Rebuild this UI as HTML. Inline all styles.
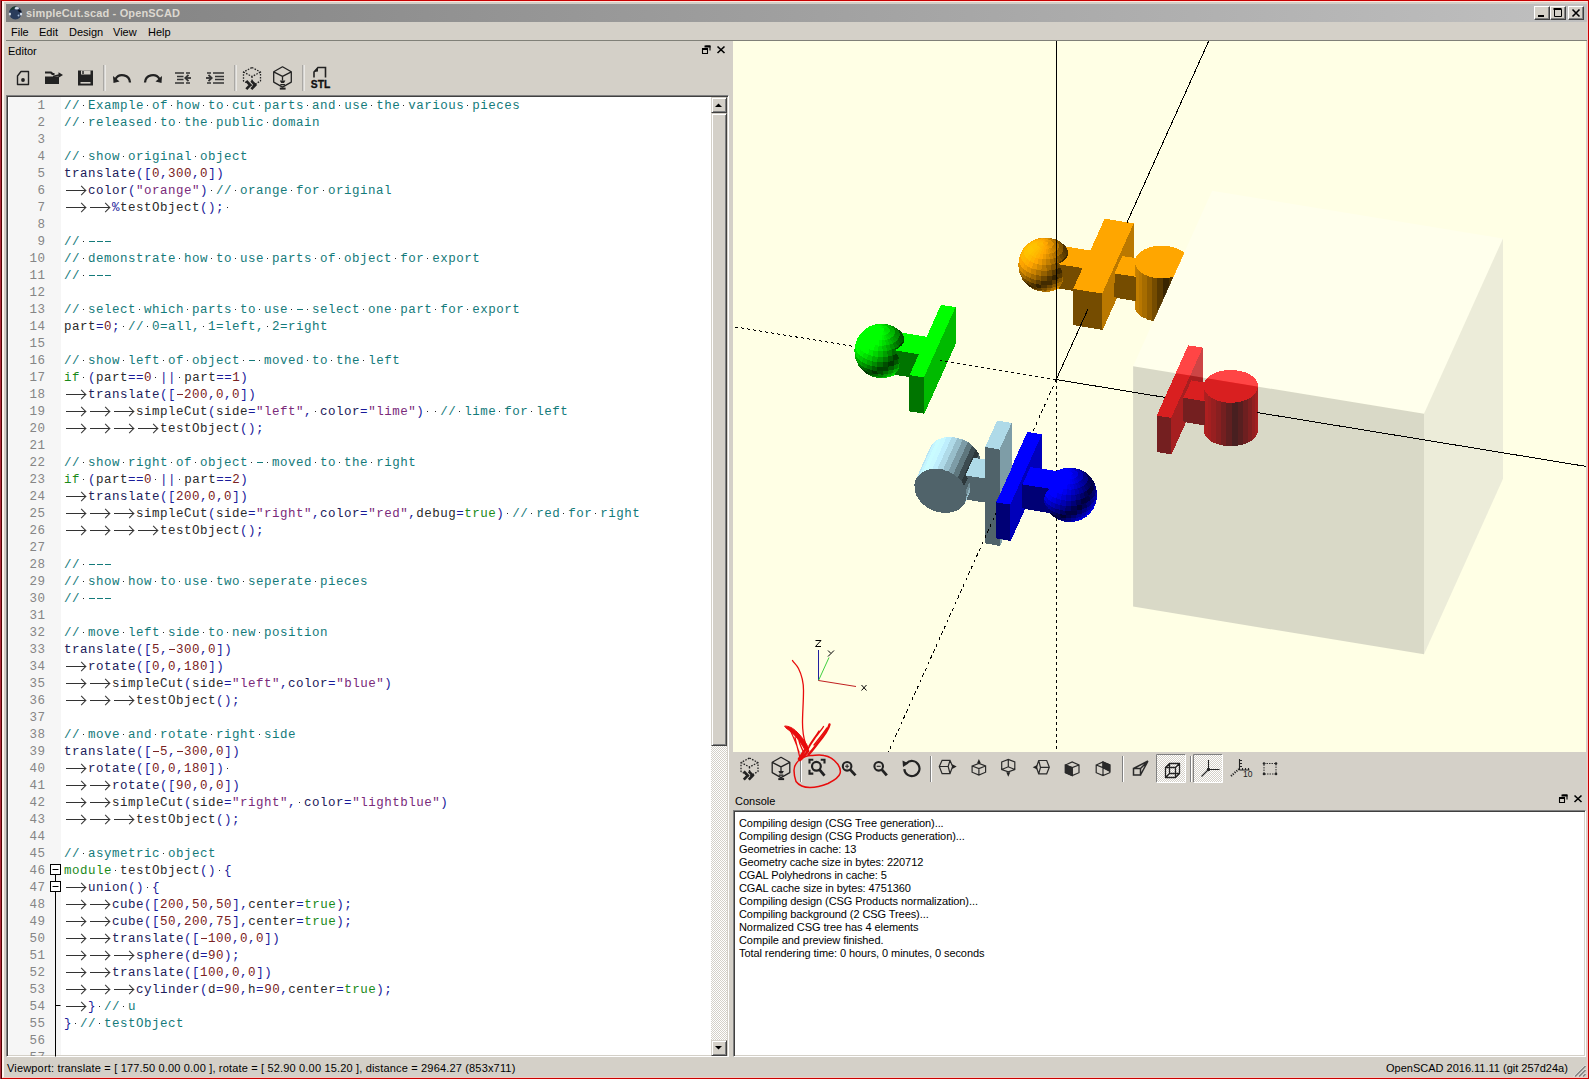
<!DOCTYPE html>
<html><head><meta charset="utf-8"><style>
*{margin:0;padding:0;box-sizing:border-box}
html,body{width:1589px;height:1079px;overflow:hidden;background:#c80000;font-family:"Liberation Sans",sans-serif}
.a{position:absolute}
#win{position:absolute;left:2px;top:1px;width:1586px;height:1077px;background:#d4d0c8;border-left:2px solid #fff6ee;border-top:1px solid #ffe4dc;border-right:1px solid #f4c4c4;border-bottom:1px solid #f8c8c0}
#title{position:absolute;left:6px;top:4px;width:1581px;height:18px;background:linear-gradient(90deg,#808080,#c0c0c0)}
#title span{position:absolute;left:20px;top:3px;font-size:11px;font-weight:bold;color:#dcd8d0;white-space:pre;letter-spacing:0.15px}
.tbtn{position:absolute;top:6px;width:16px;height:14px;background:#d4d0c8;border-top:1px solid #fff;border-left:1px solid #fff;border-right:1px solid #404040;border-bottom:1px solid #404040;box-shadow:inset -1px -1px 0 #808080}
.menu{position:absolute;top:26px;font-size:11px;color:#000;white-space:pre}
.lbl{position:absolute;font-size:11px;color:#000;white-space:pre}
#ed{position:absolute;left:6px;top:95px;width:723px;height:962px;border-top:1px solid #808080;border-left:1px solid #808080;border-right:1px solid #fff;border-bottom:1px solid #fff;background:#fff;box-shadow:inset 1px 1px 0 #404040,inset -1px -1px 0 #d4d0c8}
#edin{position:absolute;left:7px;top:97px;width:721px;height:959px;border-top:1px solid #808080;border-left:1px solid #808080;overflow:hidden}
#margin{position:absolute;left:9px;top:97px;width:52px;height:958px;background:#f6f6f6}
.ln{position:absolute;left:8px;width:37.5px;text-align:right;font-family:"Liberation Mono",monospace;font-size:12.5px;letter-spacing:0.5px;line-height:17px;color:#858585;white-space:pre}
.cl{position:absolute;left:64px;font-family:"Liberation Mono",monospace;font-size:12.5px;letter-spacing:0.5px;line-height:17px;white-space:pre;height:17px}
.tb{display:inline-block;width:24px;height:17px;vertical-align:top;position:relative}
.tb::before{content:"";position:absolute;left:2px;width:19px;top:7px;height:1px;background:#333}
.tb::after{content:"";position:absolute;left:14px;top:4px;width:6px;height:6px;border-top:1px solid #333;border-right:1px solid #333;transform:rotate(45deg)}
.d{display:inline-block;width:8px;height:17px;vertical-align:top;position:relative;background:none!important}
.d::after{content:"";position:absolute;left:3px;top:7px;width:1px;height:1px;background:#222}
#sb{position:absolute;left:711px;top:97px;width:16px;height:959px;background:repeating-conic-gradient(#fff 0 25%,#d4d0c8 0 50%) 0 0/2px 2px}
.sbb{position:absolute;left:711px;width:16px;background:#d4d0c8;border-top:1px solid #d4d0c8;border-left:1px solid #d4d0c8;border-right:1px solid #404040;border-bottom:1px solid #404040;box-shadow:inset 1px 1px 0 #fff,inset -1px -1px 0 #808080}
#vp{position:absolute;left:733px;top:41px;width:853px;height:711px;background:#ffffe5}
#con{position:absolute;left:733px;top:810px;width:853px;height:247px;background:#fff;border-top:1px solid #808080;border-left:1px solid #808080;border-right:1px solid #fff;border-bottom:1px solid #fff;box-shadow:inset 1px 1px 0 #404040,inset -1px -1px 0 #d4d0c8}
.cn{position:absolute;left:739px;font-size:11px;line-height:13px;color:#000;white-space:pre;letter-spacing:-0.08px}

.h{display:inline-block;width:8px;height:17px;vertical-align:top;position:relative}.h::after{content:"";position:absolute;left:1px;top:7px;width:6px;height:1px;background:currentColor}
#status{position:absolute;left:6px;top:1057px;width:1580px;height:20px}
#svg{position:absolute;left:0;top:0}
</style></head><body>
<div class="a" style="left:0;top:0;width:1px;height:1079px;background:#b02a3c"></div><div class="a" style="left:1px;top:1px;width:1px;height:1078px;background:#500000"></div><div id="win"></div>
<div id="title"><span>simpleCut.scad - OpenSCAD</span></div>
<div class="tbtn" style="left:1534px"></div>
<div class="tbtn" style="left:1550px"></div>
<div class="tbtn" style="left:1568px"></div>
<div class="menu" style="left:11px">File</div>
<div class="menu" style="left:39px">Edit</div>
<div class="menu" style="left:69px">Design</div>
<div class="menu" style="left:113px">View</div>
<div class="menu" style="left:148px">Help</div>
<div class="a" style="left:6px;top:40px;width:1581px;height:1px;background:#808078"></div>
<div class="lbl" style="left:8px;top:45px">Editor</div>
<div id="ed"></div>
<div id="margin"></div>
<div class="a" style="left:0;top:0;width:711px;height:1056px;overflow:hidden"><div class="ln" style="top:98px">1</div><div class="cl" style="top:98px"><span style="color:#137a7a">//<b class="d" style="background:#137a7a"></b>Example<b class="d" style="background:#137a7a"></b>of<b class="d" style="background:#137a7a"></b>how<b class="d" style="background:#137a7a"></b>to<b class="d" style="background:#137a7a"></b>cut<b class="d" style="background:#137a7a"></b>parts<b class="d" style="background:#137a7a"></b>and<b class="d" style="background:#137a7a"></b>use<b class="d" style="background:#137a7a"></b>the<b class="d" style="background:#137a7a"></b>various<b class="d" style="background:#137a7a"></b>pieces</span></div>
<div class="ln" style="top:115px">2</div><div class="cl" style="top:115px"><span style="color:#137a7a">//<b class="d" style="background:#137a7a"></b>released<b class="d" style="background:#137a7a"></b>to<b class="d" style="background:#137a7a"></b>the<b class="d" style="background:#137a7a"></b>public<b class="d" style="background:#137a7a"></b>domain</span></div>
<div class="ln" style="top:132px">3</div><div class="cl" style="top:132px"></div>
<div class="ln" style="top:149px">4</div><div class="cl" style="top:149px"><span style="color:#137a7a">//<b class="d" style="background:#137a7a"></b>show<b class="d" style="background:#137a7a"></b>original<b class="d" style="background:#137a7a"></b>object</span></div>
<div class="ln" style="top:166px">5</div><div class="cl" style="top:166px"><span style="color:#20205a">translate</span><span style="color:#1a1a9a">(</span><span style="color:#1a1a9a">[</span><span style="color:#7a2222">0</span><span style="color:#1a1a9a">,</span><span style="color:#7a2222">300</span><span style="color:#1a1a9a">,</span><span style="color:#7a2222">0</span><span style="color:#1a1a9a">]</span><span style="color:#1a1a9a">)</span></div>
<div class="ln" style="top:183px">6</div><div class="cl" style="top:183px"><i class="tb"></i><span style="color:#20205a">color</span><span style="color:#1a1a9a">(</span><span style="color:#7a2a7a">&quot;orange&quot;</span><span style="color:#1a1a9a">)</span><b class="d" style="background:#555"></b><span style="color:#137a7a">//<b class="d" style="background:#137a7a"></b>orange<b class="d" style="background:#137a7a"></b>for<b class="d" style="background:#137a7a"></b>original</span></div>
<div class="ln" style="top:200px">7</div><div class="cl" style="top:200px"><i class="tb"></i><i class="tb"></i><span style="color:#1a1a9a">%</span><span style="color:#2a2a2a">testObject</span><span style="color:#1a1a9a">(</span><span style="color:#1a1a9a">)</span><span style="color:#1a1a9a">;</span><b class="d" style="background:#555"></b></div>
<div class="ln" style="top:217px">8</div><div class="cl" style="top:217px"></div>
<div class="ln" style="top:234px">9</div><div class="cl" style="top:234px"><span style="color:#137a7a">//<b class="d" style="background:#137a7a"></b><b class="h"></b><b class="h"></b><b class="h"></b></span></div>
<div class="ln" style="top:251px">10</div><div class="cl" style="top:251px"><span style="color:#137a7a">//<b class="d" style="background:#137a7a"></b>demonstrate<b class="d" style="background:#137a7a"></b>how<b class="d" style="background:#137a7a"></b>to<b class="d" style="background:#137a7a"></b>use<b class="d" style="background:#137a7a"></b>parts<b class="d" style="background:#137a7a"></b>of<b class="d" style="background:#137a7a"></b>object<b class="d" style="background:#137a7a"></b>for<b class="d" style="background:#137a7a"></b>export</span></div>
<div class="ln" style="top:268px">11</div><div class="cl" style="top:268px"><span style="color:#137a7a">//<b class="d" style="background:#137a7a"></b><b class="h"></b><b class="h"></b><b class="h"></b></span></div>
<div class="ln" style="top:285px">12</div><div class="cl" style="top:285px"></div>
<div class="ln" style="top:302px">13</div><div class="cl" style="top:302px"><span style="color:#137a7a">//<b class="d" style="background:#137a7a"></b>select<b class="d" style="background:#137a7a"></b>which<b class="d" style="background:#137a7a"></b>parts<b class="d" style="background:#137a7a"></b>to<b class="d" style="background:#137a7a"></b>use<b class="d" style="background:#137a7a"></b><b class="h"></b><b class="d" style="background:#137a7a"></b>select<b class="d" style="background:#137a7a"></b>one<b class="d" style="background:#137a7a"></b>part<b class="d" style="background:#137a7a"></b>for<b class="d" style="background:#137a7a"></b>export</span></div>
<div class="ln" style="top:319px">14</div><div class="cl" style="top:319px"><span style="color:#2a2a2a">part</span><span style="color:#1a1a9a">=</span><span style="color:#7a2222">0</span><span style="color:#1a1a9a">;</span><b class="d" style="background:#555"></b><span style="color:#137a7a">//<b class="d" style="background:#137a7a"></b>0=all,<b class="d" style="background:#137a7a"></b>1=left,<b class="d" style="background:#137a7a"></b>2=right</span></div>
<div class="ln" style="top:336px">15</div><div class="cl" style="top:336px"></div>
<div class="ln" style="top:353px">16</div><div class="cl" style="top:353px"><span style="color:#137a7a">//<b class="d" style="background:#137a7a"></b>show<b class="d" style="background:#137a7a"></b>left<b class="d" style="background:#137a7a"></b>of<b class="d" style="background:#137a7a"></b>object<b class="d" style="background:#137a7a"></b><b class="h"></b><b class="d" style="background:#137a7a"></b>moved<b class="d" style="background:#137a7a"></b>to<b class="d" style="background:#137a7a"></b>the<b class="d" style="background:#137a7a"></b>left</span></div>
<div class="ln" style="top:370px">17</div><div class="cl" style="top:370px"><span style="color:#1a8a1a">if</span><b class="d" style="background:#555"></b><span style="color:#1a1a9a">(</span><span style="color:#2a2a2a">part</span><span style="color:#1a1a9a">=</span><span style="color:#1a1a9a">=</span><span style="color:#7a2222">0</span><b class="d" style="background:#555"></b><span style="color:#1a1a9a">|</span><span style="color:#1a1a9a">|</span><b class="d" style="background:#555"></b><span style="color:#2a2a2a">part</span><span style="color:#1a1a9a">=</span><span style="color:#1a1a9a">=</span><span style="color:#7a2222">1</span><span style="color:#1a1a9a">)</span></div>
<div class="ln" style="top:387px">18</div><div class="cl" style="top:387px"><i class="tb"></i><span style="color:#20205a">translate</span><span style="color:#1a1a9a">(</span><span style="color:#1a1a9a">[</span><span style="color:#7a2222"><b class="h"></b></span><span style="color:#7a2222">200</span><span style="color:#1a1a9a">,</span><span style="color:#7a2222">0</span><span style="color:#1a1a9a">,</span><span style="color:#7a2222">0</span><span style="color:#1a1a9a">]</span><span style="color:#1a1a9a">)</span></div>
<div class="ln" style="top:404px">19</div><div class="cl" style="top:404px"><i class="tb"></i><i class="tb"></i><i class="tb"></i><span style="color:#2a2a2a">simpleCut</span><span style="color:#1a1a9a">(</span><span style="color:#2a2a2a">side</span><span style="color:#1a1a9a">=</span><span style="color:#7a2a7a">&quot;left&quot;</span><span style="color:#1a1a9a">,</span><b class="d" style="background:#555"></b><span style="color:#20205a">color</span><span style="color:#1a1a9a">=</span><span style="color:#7a2a7a">&quot;lime&quot;</span><span style="color:#1a1a9a">)</span><b class="d" style="background:#555"></b><b class="d" style="background:#555"></b><span style="color:#137a7a">//<b class="d" style="background:#137a7a"></b>lime<b class="d" style="background:#137a7a"></b>for<b class="d" style="background:#137a7a"></b>left</span></div>
<div class="ln" style="top:421px">20</div><div class="cl" style="top:421px"><i class="tb"></i><i class="tb"></i><i class="tb"></i><i class="tb"></i><span style="color:#2a2a2a">testObject</span><span style="color:#1a1a9a">(</span><span style="color:#1a1a9a">)</span><span style="color:#1a1a9a">;</span></div>
<div class="ln" style="top:438px">21</div><div class="cl" style="top:438px"></div>
<div class="ln" style="top:455px">22</div><div class="cl" style="top:455px"><span style="color:#137a7a">//<b class="d" style="background:#137a7a"></b>show<b class="d" style="background:#137a7a"></b>right<b class="d" style="background:#137a7a"></b>of<b class="d" style="background:#137a7a"></b>object<b class="d" style="background:#137a7a"></b><b class="h"></b><b class="d" style="background:#137a7a"></b>moved<b class="d" style="background:#137a7a"></b>to<b class="d" style="background:#137a7a"></b>the<b class="d" style="background:#137a7a"></b>right</span></div>
<div class="ln" style="top:472px">23</div><div class="cl" style="top:472px"><span style="color:#1a8a1a">if</span><b class="d" style="background:#555"></b><span style="color:#1a1a9a">(</span><span style="color:#2a2a2a">part</span><span style="color:#1a1a9a">=</span><span style="color:#1a1a9a">=</span><span style="color:#7a2222">0</span><b class="d" style="background:#555"></b><span style="color:#1a1a9a">|</span><span style="color:#1a1a9a">|</span><b class="d" style="background:#555"></b><span style="color:#2a2a2a">part</span><span style="color:#1a1a9a">=</span><span style="color:#1a1a9a">=</span><span style="color:#7a2222">2</span><span style="color:#1a1a9a">)</span></div>
<div class="ln" style="top:489px">24</div><div class="cl" style="top:489px"><i class="tb"></i><span style="color:#20205a">translate</span><span style="color:#1a1a9a">(</span><span style="color:#1a1a9a">[</span><span style="color:#7a2222">200</span><span style="color:#1a1a9a">,</span><span style="color:#7a2222">0</span><span style="color:#1a1a9a">,</span><span style="color:#7a2222">0</span><span style="color:#1a1a9a">]</span><span style="color:#1a1a9a">)</span></div>
<div class="ln" style="top:506px">25</div><div class="cl" style="top:506px"><i class="tb"></i><i class="tb"></i><i class="tb"></i><span style="color:#2a2a2a">simpleCut</span><span style="color:#1a1a9a">(</span><span style="color:#2a2a2a">side</span><span style="color:#1a1a9a">=</span><span style="color:#7a2a7a">&quot;right&quot;</span><span style="color:#1a1a9a">,</span><span style="color:#20205a">color</span><span style="color:#1a1a9a">=</span><span style="color:#7a2a7a">&quot;red&quot;</span><span style="color:#1a1a9a">,</span><span style="color:#2a2a2a">debug</span><span style="color:#1a1a9a">=</span><span style="color:#1a8a1a">true</span><span style="color:#1a1a9a">)</span><b class="d" style="background:#555"></b><span style="color:#137a7a">//<b class="d" style="background:#137a7a"></b>red<b class="d" style="background:#137a7a"></b>for<b class="d" style="background:#137a7a"></b>right</span></div>
<div class="ln" style="top:523px">26</div><div class="cl" style="top:523px"><i class="tb"></i><i class="tb"></i><i class="tb"></i><i class="tb"></i><span style="color:#2a2a2a">testObject</span><span style="color:#1a1a9a">(</span><span style="color:#1a1a9a">)</span><span style="color:#1a1a9a">;</span></div>
<div class="ln" style="top:540px">27</div><div class="cl" style="top:540px"></div>
<div class="ln" style="top:557px">28</div><div class="cl" style="top:557px"><span style="color:#137a7a">//<b class="d" style="background:#137a7a"></b><b class="h"></b><b class="h"></b><b class="h"></b></span></div>
<div class="ln" style="top:574px">29</div><div class="cl" style="top:574px"><span style="color:#137a7a">//<b class="d" style="background:#137a7a"></b>show<b class="d" style="background:#137a7a"></b>how<b class="d" style="background:#137a7a"></b>to<b class="d" style="background:#137a7a"></b>use<b class="d" style="background:#137a7a"></b>two<b class="d" style="background:#137a7a"></b>seperate<b class="d" style="background:#137a7a"></b>pieces</span></div>
<div class="ln" style="top:591px">30</div><div class="cl" style="top:591px"><span style="color:#137a7a">//<b class="d" style="background:#137a7a"></b><b class="h"></b><b class="h"></b><b class="h"></b></span></div>
<div class="ln" style="top:608px">31</div><div class="cl" style="top:608px"></div>
<div class="ln" style="top:625px">32</div><div class="cl" style="top:625px"><span style="color:#137a7a">//<b class="d" style="background:#137a7a"></b>move<b class="d" style="background:#137a7a"></b>left<b class="d" style="background:#137a7a"></b>side<b class="d" style="background:#137a7a"></b>to<b class="d" style="background:#137a7a"></b>new<b class="d" style="background:#137a7a"></b>position</span></div>
<div class="ln" style="top:642px">33</div><div class="cl" style="top:642px"><span style="color:#20205a">translate</span><span style="color:#1a1a9a">(</span><span style="color:#1a1a9a">[</span><span style="color:#7a2222">5</span><span style="color:#1a1a9a">,</span><span style="color:#7a2222"><b class="h"></b></span><span style="color:#7a2222">300</span><span style="color:#1a1a9a">,</span><span style="color:#7a2222">0</span><span style="color:#1a1a9a">]</span><span style="color:#1a1a9a">)</span></div>
<div class="ln" style="top:659px">34</div><div class="cl" style="top:659px"><i class="tb"></i><span style="color:#20205a">rotate</span><span style="color:#1a1a9a">(</span><span style="color:#1a1a9a">[</span><span style="color:#7a2222">0</span><span style="color:#1a1a9a">,</span><span style="color:#7a2222">0</span><span style="color:#1a1a9a">,</span><span style="color:#7a2222">180</span><span style="color:#1a1a9a">]</span><span style="color:#1a1a9a">)</span></div>
<div class="ln" style="top:676px">35</div><div class="cl" style="top:676px"><i class="tb"></i><i class="tb"></i><span style="color:#2a2a2a">simpleCut</span><span style="color:#1a1a9a">(</span><span style="color:#2a2a2a">side</span><span style="color:#1a1a9a">=</span><span style="color:#7a2a7a">&quot;left&quot;</span><span style="color:#1a1a9a">,</span><span style="color:#20205a">color</span><span style="color:#1a1a9a">=</span><span style="color:#7a2a7a">&quot;blue&quot;</span><span style="color:#1a1a9a">)</span></div>
<div class="ln" style="top:693px">36</div><div class="cl" style="top:693px"><i class="tb"></i><i class="tb"></i><i class="tb"></i><span style="color:#2a2a2a">testObject</span><span style="color:#1a1a9a">(</span><span style="color:#1a1a9a">)</span><span style="color:#1a1a9a">;</span></div>
<div class="ln" style="top:710px">37</div><div class="cl" style="top:710px"></div>
<div class="ln" style="top:727px">38</div><div class="cl" style="top:727px"><span style="color:#137a7a">//<b class="d" style="background:#137a7a"></b>move<b class="d" style="background:#137a7a"></b>and<b class="d" style="background:#137a7a"></b>rotate<b class="d" style="background:#137a7a"></b>right<b class="d" style="background:#137a7a"></b>side</span></div>
<div class="ln" style="top:744px">39</div><div class="cl" style="top:744px"><span style="color:#20205a">translate</span><span style="color:#1a1a9a">(</span><span style="color:#1a1a9a">[</span><span style="color:#7a2222"><b class="h"></b></span><span style="color:#7a2222">5</span><span style="color:#1a1a9a">,</span><span style="color:#7a2222"><b class="h"></b></span><span style="color:#7a2222">300</span><span style="color:#1a1a9a">,</span><span style="color:#7a2222">0</span><span style="color:#1a1a9a">]</span><span style="color:#1a1a9a">)</span></div>
<div class="ln" style="top:761px">40</div><div class="cl" style="top:761px"><i class="tb"></i><span style="color:#20205a">rotate</span><span style="color:#1a1a9a">(</span><span style="color:#1a1a9a">[</span><span style="color:#7a2222">0</span><span style="color:#1a1a9a">,</span><span style="color:#7a2222">0</span><span style="color:#1a1a9a">,</span><span style="color:#7a2222">180</span><span style="color:#1a1a9a">]</span><span style="color:#1a1a9a">)</span><b class="d" style="background:#555"></b></div>
<div class="ln" style="top:778px">41</div><div class="cl" style="top:778px"><i class="tb"></i><i class="tb"></i><span style="color:#20205a">rotate</span><span style="color:#1a1a9a">(</span><span style="color:#1a1a9a">[</span><span style="color:#7a2222">90</span><span style="color:#1a1a9a">,</span><span style="color:#7a2222">0</span><span style="color:#1a1a9a">,</span><span style="color:#7a2222">0</span><span style="color:#1a1a9a">]</span><span style="color:#1a1a9a">)</span></div>
<div class="ln" style="top:795px">42</div><div class="cl" style="top:795px"><i class="tb"></i><i class="tb"></i><span style="color:#2a2a2a">simpleCut</span><span style="color:#1a1a9a">(</span><span style="color:#2a2a2a">side</span><span style="color:#1a1a9a">=</span><span style="color:#7a2a7a">&quot;right&quot;</span><span style="color:#1a1a9a">,</span><b class="d" style="background:#555"></b><span style="color:#20205a">color</span><span style="color:#1a1a9a">=</span><span style="color:#7a2a7a">&quot;lightblue&quot;</span><span style="color:#1a1a9a">)</span></div>
<div class="ln" style="top:812px">43</div><div class="cl" style="top:812px"><i class="tb"></i><i class="tb"></i><i class="tb"></i><span style="color:#2a2a2a">testObject</span><span style="color:#1a1a9a">(</span><span style="color:#1a1a9a">)</span><span style="color:#1a1a9a">;</span></div>
<div class="ln" style="top:829px">44</div><div class="cl" style="top:829px"></div>
<div class="ln" style="top:846px">45</div><div class="cl" style="top:846px"><span style="color:#137a7a">//<b class="d" style="background:#137a7a"></b>asymetric<b class="d" style="background:#137a7a"></b>object</span></div>
<div class="ln" style="top:863px">46</div><div class="cl" style="top:863px"><span style="color:#1a8a1a">module</span><b class="d" style="background:#555"></b><span style="color:#2a2a2a">testObject</span><span style="color:#1a1a9a">(</span><span style="color:#1a1a9a">)</span><b class="d" style="background:#555"></b><span style="color:#1a1a9a">{</span></div>
<div class="ln" style="top:880px">47</div><div class="cl" style="top:880px"><i class="tb"></i><span style="color:#20205a">union</span><span style="color:#1a1a9a">(</span><span style="color:#1a1a9a">)</span><b class="d" style="background:#555"></b><span style="color:#1a1a9a">{</span></div>
<div class="ln" style="top:897px">48</div><div class="cl" style="top:897px"><i class="tb"></i><i class="tb"></i><span style="color:#20205a">cube</span><span style="color:#1a1a9a">(</span><span style="color:#1a1a9a">[</span><span style="color:#7a2222">200</span><span style="color:#1a1a9a">,</span><span style="color:#7a2222">50</span><span style="color:#1a1a9a">,</span><span style="color:#7a2222">50</span><span style="color:#1a1a9a">]</span><span style="color:#1a1a9a">,</span><span style="color:#2a2a2a">center</span><span style="color:#1a1a9a">=</span><span style="color:#1a8a1a">true</span><span style="color:#1a1a9a">)</span><span style="color:#1a1a9a">;</span></div>
<div class="ln" style="top:914px">49</div><div class="cl" style="top:914px"><i class="tb"></i><i class="tb"></i><span style="color:#20205a">cube</span><span style="color:#1a1a9a">(</span><span style="color:#1a1a9a">[</span><span style="color:#7a2222">50</span><span style="color:#1a1a9a">,</span><span style="color:#7a2222">200</span><span style="color:#1a1a9a">,</span><span style="color:#7a2222">75</span><span style="color:#1a1a9a">]</span><span style="color:#1a1a9a">,</span><span style="color:#2a2a2a">center</span><span style="color:#1a1a9a">=</span><span style="color:#1a8a1a">true</span><span style="color:#1a1a9a">)</span><span style="color:#1a1a9a">;</span></div>
<div class="ln" style="top:931px">50</div><div class="cl" style="top:931px"><i class="tb"></i><i class="tb"></i><span style="color:#20205a">translate</span><span style="color:#1a1a9a">(</span><span style="color:#1a1a9a">[</span><span style="color:#7a2222"><b class="h"></b></span><span style="color:#7a2222">100</span><span style="color:#1a1a9a">,</span><span style="color:#7a2222">0</span><span style="color:#1a1a9a">,</span><span style="color:#7a2222">0</span><span style="color:#1a1a9a">]</span><span style="color:#1a1a9a">)</span></div>
<div class="ln" style="top:948px">51</div><div class="cl" style="top:948px"><i class="tb"></i><i class="tb"></i><i class="tb"></i><span style="color:#20205a">sphere</span><span style="color:#1a1a9a">(</span><span style="color:#2a2a2a">d</span><span style="color:#1a1a9a">=</span><span style="color:#7a2222">90</span><span style="color:#1a1a9a">)</span><span style="color:#1a1a9a">;</span></div>
<div class="ln" style="top:965px">52</div><div class="cl" style="top:965px"><i class="tb"></i><i class="tb"></i><span style="color:#20205a">translate</span><span style="color:#1a1a9a">(</span><span style="color:#1a1a9a">[</span><span style="color:#7a2222">100</span><span style="color:#1a1a9a">,</span><span style="color:#7a2222">0</span><span style="color:#1a1a9a">,</span><span style="color:#7a2222">0</span><span style="color:#1a1a9a">]</span><span style="color:#1a1a9a">)</span></div>
<div class="ln" style="top:982px">53</div><div class="cl" style="top:982px"><i class="tb"></i><i class="tb"></i><i class="tb"></i><span style="color:#20205a">cylinder</span><span style="color:#1a1a9a">(</span><span style="color:#2a2a2a">d</span><span style="color:#1a1a9a">=</span><span style="color:#7a2222">90</span><span style="color:#1a1a9a">,</span><span style="color:#2a2a2a">h</span><span style="color:#1a1a9a">=</span><span style="color:#7a2222">90</span><span style="color:#1a1a9a">,</span><span style="color:#2a2a2a">center</span><span style="color:#1a1a9a">=</span><span style="color:#1a8a1a">true</span><span style="color:#1a1a9a">)</span><span style="color:#1a1a9a">;</span></div>
<div class="ln" style="top:999px">54</div><div class="cl" style="top:999px"><i class="tb"></i><span style="color:#1a1a9a">}</span><b class="d" style="background:#555"></b><span style="color:#137a7a">//<b class="d" style="background:#137a7a"></b>u</span></div>
<div class="ln" style="top:1016px">55</div><div class="cl" style="top:1016px"><span style="color:#1a1a9a">}</span><b class="d" style="background:#555"></b><span style="color:#137a7a">//<b class="d" style="background:#137a7a"></b>testObject</span></div>
<div class="ln" style="top:1033px">56</div><div class="cl" style="top:1033px"></div>
<div class="ln" style="top:1050px">57</div>
</div>
<svg class="a" style="left:0;top:0" width="80" height="1079"><g fill="#fff" stroke="#000" stroke-width="1"><path d="M55.5 873.5v183M55.5 1005.5h5"/><rect x="50.5" y="864.5" width="10" height="10"/><rect x="50.5" y="881.5" width="10" height="10"/><path d="M52.5 869.5h6M52.5 886.5h6"/></g></svg>
<div id="sb"></div>
<div class="sbb" style="top:97px;height:16px"></div>
<div class="sbb" style="top:113px;height:633px"></div>
<div class="sbb" style="top:1040px;height:16px"></div>
<div id="vp"></div>
<div class="lbl" style="left:735px;top:795px">Console</div>
<div id="con"></div>
<div class="cn" style="top:817px">Compiling design (CSG Tree generation)...</div><div class="cn" style="top:830px">Compiling design (CSG Products generation)...</div><div class="cn" style="top:843px">Geometries in cache: 13</div><div class="cn" style="top:856px">Geometry cache size in bytes: 220712</div><div class="cn" style="top:869px">CGAL Polyhedrons in cache: 5</div><div class="cn" style="top:882px">CGAL cache size in bytes: 4751360</div><div class="cn" style="top:895px">Compiling design (CSG Products normalization)...</div><div class="cn" style="top:908px">Compiling background (2 CSG Trees)...</div><div class="cn" style="top:921px">Normalized CSG tree has 4 elements</div><div class="cn" style="top:934px">Compile and preview finished.</div><div class="cn" style="top:947px">Total rendering time: 0 hours, 0 minutes, 0 seconds</div>
<div class="lbl" style="left:7px;top:1062px;letter-spacing:0.17px">Viewport: translate = [ 177.50 0.00 0.00 ], rotate = [ 52.90 0.00 15.20 ], distance = 2964.27 (853x711)</div>
<div class="lbl" style="left:1386px;top:1062px">OpenSCAD 2016.11.11 (git 257d24a)</div>
<svg id="svg" width="1589" height="1079" viewBox="0 0 1589 1079">
<defs><clipPath id="vpc"><rect x="733" y="41" width="853" height="711"/></clipPath></defs>
<g clip-path="url(#vpc)"><g shape-rendering="crispEdges"><path fill="#00ff00" d="M901.62 332.62 901.62 333.38 902.62 334.38 903.88 337.38 903.38 342.12 901.62 344.88 898.62 347.62 894.12 349.88 893.88 350.62 919.12 354.62 926.88 336.88Z"/><path fill="#007500" d="M893.62 350.12 893.62 350.88 896.62 354.38 898.62 358.88 899.12 361.88 898.62 367.62 896.62 371.38 893.62 374.12 893.62 374.62 909.62 377.12 909.88 374.62 916.88 359.62 918.88 354.38Z"/><path fill="#00ba00" d="M943.88 339.88 943.38 339.88 935.88 356.62 935.88 380.88 936.38 380.88 943.88 364.38Z"/><path fill="#00ff00" d="M955.88 307.12 940.88 304.88 909.38 375.38 924.38 377.62Z"/><path fill="#007500" d="M909.38 375.12 909.38 411.38 924.12 413.62 924.12 377.38Z"/><path fill="#00ba00" d="M955.88 307.38 955.38 307.38 923.88 377.38 923.88 413.62 924.62 413.12 955.88 343.62ZM943.38 341.38 943.62 363.88 936.38 379.62 936.12 357.12Z"/><path fill="#00ff00" d="M878.62 329.12 879.12 330.62 881.12 331.38 883.38 331.12 884.62 330.12 884.38 328.38 882.88 327.62 880.38 327.62Z"/><path fill="#00df00" d="M884.38 329.38 884.38 330.12 889.38 331.88 890.12 331.38 889.88 330.38Z"/><path fill="#00de00" d="M884.38 329.12 884.88 329.88 890.12 330.88 890.12 329.38Z"/><path fill="#00dd00" d="M889.88 329.62 889.62 328.38 884.12 328.62 884.38 329.38Z"/><path fill="#00df00" d="M889.38 328.12 889.12 327.62 884.62 328.12 884.12 328.88 888.88 328.88Z"/><path fill="#00e100" d="M888.88 327.38 887.38 326.62 883.88 327.88 883.62 328.62 888.88 327.88Z"/><path fill="#00e500" d="M887.62 326.62 885.88 326.12 883.62 327.38 883.38 328.38 887.62 327.12Z"/><path fill="#00e900" d="M886.38 325.88 884.38 325.62 883.12 326.88 882.62 328.12 883.62 328.12 886.12 326.62Z"/><path fill="#00ef00" d="M884.62 325.38 882.88 325.38 882.12 327.88 883.12 327.88 884.62 326.12Z"/><path fill="#00f500" d="M881.12 325.12 881.38 327.88 882.38 327.88 883.12 325.38Z"/><path fill="#00fb00" d="M879.38 325.38 880.62 327.88 881.62 327.88 881.38 325.12Z"/><path fill="#00ff00" d="M877.88 325.62 877.88 326.12 880.12 328.12 880.88 327.88 880.88 327.12 879.62 325.38Z"/><path fill="#00ff00" d="M876.38 326.12 876.62 326.88 879.38 328.12 880.38 328.12 880.38 327.62 878.38 325.88Z"/><path fill="#00ff00" d="M875.12 326.88 875.62 327.62 880.12 328.38 880.12 327.88 876.88 326.38Z"/><path fill="#00ff00" d="M874.38 327.62 874.62 328.38 879.62 328.62 879.62 328.12 874.88 327.12Z"/><path fill="#00ff00" d="M873.62 328.38 873.62 329.12 879.12 329.12 878.88 328.38 874.88 327.88Z"/><path fill="#00ff00" d="M873.12 330.12 878.88 329.62 879.12 328.88 873.38 328.88Z"/><path fill="#00ff00" d="M878.88 329.38 873.12 329.88 873.12 331.12 878.38 330.12Z"/><path fill="#00ff00" d="M879.12 329.62 873.38 330.88 873.38 331.88 874.12 332.38 878.88 330.38Z"/><path fill="#00ff00" d="M879.38 330.12 878.62 329.88 873.88 331.88 873.88 332.62 875.12 333.12 879.38 330.62Z"/><path fill="#00ff00" d="M879.88 330.38 878.62 330.38 874.88 332.62 874.62 333.38 875.12 333.88 876.62 333.62 879.62 331.12Z"/><path fill="#00ff00" d="M880.12 330.62 878.88 330.88 875.88 333.38 875.62 334.12 877.38 334.62 880.12 331.38Z"/><path fill="#00ff00" d="M880.62 330.88 879.88 330.88 876.88 334.88 879.12 334.88Z"/><path fill="#00ff00" d="M881.38 330.88 880.38 330.88 878.62 335.38 880.62 335.38Z"/><path fill="#00ff00" d="M881.88 331.12 880.88 331.38 880.12 335.62 882.12 335.62Z"/><path fill="#00fe00" d="M881.62 331.12 881.88 335.62 883.88 335.38 882.62 330.88Z"/><path fill="#00f700" d="M882.38 330.88 883.62 335.38 885.62 335.12 883.38 331.12Z"/><path fill="#00f100" d="M883.12 330.62 882.88 331.38 884.88 334.62 886.88 334.62 886.88 333.88 883.62 330.62Z"/><path fill="#00eb00" d="M883.38 330.62 883.38 331.12 886.62 334.38 888.12 333.88 888.12 333.12 884.12 330.38Z"/><path fill="#00e600" d="M883.88 330.12 884.12 331.12 887.38 333.38 888.62 333.62 889.12 333.12 889.12 332.38Z"/><path fill="#00e200" d="M884.12 329.88 884.38 330.62 888.88 332.88 889.88 332.12 889.62 331.38Z"/><path fill="#00b600" d="M889.88 330.62 889.88 332.12 894.12 334.38 895.12 334.12 895.12 332.38Z"/><path fill="#00b300" d="M889.88 329.62 889.88 330.88 895.38 332.88 895.38 331.38 894.88 330.62Z"/><path fill="#00b200" d="M889.38 328.38 889.88 329.88 895.12 331.12 894.62 329.12Z"/><path fill="#00b400" d="M888.88 327.62 888.88 328.38 889.62 328.88 894.38 329.38 893.38 327.62Z"/><path fill="#00b900" d="M887.62 326.62 887.62 327.12 888.62 327.88 892.88 327.88 892.88 327.38 891.62 326.38Z"/><path fill="#00c000" d="M886.38 325.88 887.12 326.88 891.38 326.62 891.38 326.12 889.62 325.38Z"/><path fill="#00c900" d="M884.62 325.38 884.62 325.88 886.12 326.38 889.12 325.62 889.12 325.12 886.88 324.38Z"/><path fill="#00d400" d="M882.88 325.62 884.88 325.88 886.62 324.88 886.62 324.38 883.62 324.12Z"/><path fill="#00e000" d="M880.88 323.88 881.12 325.38 883.12 325.62 883.88 324.62 883.88 324.12Z"/><path fill="#00ed00" d="M881.38 325.38 881.12 323.88 878.12 324.12 878.12 324.62 879.38 325.62Z"/><path fill="#00fa00" d="M879.62 325.62 879.62 325.12 878.38 324.12 875.62 324.62 875.88 325.38 877.12 325.88Z"/><path fill="#00ff00" d="M873.12 325.62 873.12 326.12 875.88 326.62 878.12 326.12 878.12 325.62 876.12 324.88 874.88 324.88Z"/><path fill="#00ff00" d="M871.38 326.62 871.38 327.12 875.38 327.38 876.38 326.88 876.12 326.12 872.62 325.88Z"/><path fill="#00ff00" d="M869.62 328.62 874.62 328.12 875.12 327.12 870.88 326.88Z"/><path fill="#00ff00" d="M874.38 327.88 869.38 328.38 868.62 330.12 873.38 329.38Z"/><path fill="#00ff00" d="M873.62 328.88 868.38 329.88 868.12 331.88 873.38 330.38Z"/><path fill="#00ff00" d="M873.38 330.12 868.38 331.38 868.12 333.62 873.62 331.38Z"/><path fill="#00ff00" d="M873.62 331.12 872.12 331.38 868.38 333.12 868.12 333.88 868.62 334.88 869.62 335.12 873.62 332.62Z"/><path fill="#00ff00" d="M874.88 332.88 874.12 332.12 873.38 332.12 868.88 334.88 868.88 335.38 869.88 336.62 870.88 336.62 874.88 333.38Z"/><path fill="#00ff00" d="M875.88 333.62 874.12 333.12 870.12 336.38 870.12 336.88 872.38 338.12 875.12 335.12Z"/><path fill="#00ff00" d="M877.12 334.38 875.38 333.88 872.38 337.12 872.12 338.38 874.62 339.12 877.12 335.12Z"/><path fill="#00ff00" d="M878.88 334.88 876.88 334.62 874.62 337.88 874.38 339.38 876.88 339.88Z"/><path fill="#00ff00" d="M878.38 335.12 876.62 339.88 879.62 340.38 880.38 335.12Z"/><path fill="#00fe00" d="M880.12 335.38 879.38 340.38 882.38 340.62 882.12 335.38Z"/><path fill="#00f200" d="M881.88 335.38 882.12 340.62 885.38 340.38 884.12 335.38Z"/><path fill="#00e500" d="M883.62 335.12 884.88 340.12 887.62 339.88 887.88 339.12 885.88 335.12Z"/><path fill="#00d800" d="M885.38 334.62 885.38 335.38 887.62 339.62 890.38 338.88 887.12 334.12Z"/><path fill="#00cd00" d="M886.88 334.12 887.12 335.12 889.88 338.62 892.38 337.62 892.38 337.12 888.38 333.38Z"/><path fill="#00c300" d="M888.88 332.62 888.12 333.88 891.12 336.88 892.62 337.38 893.62 336.38 893.62 335.62 889.62 332.62Z"/><path fill="#00bb00" d="M889.12 332.12 889.12 332.88 893.38 336.12 893.88 336.12 894.88 334.62 894.88 334.12 890.12 331.62Z"/><path fill="#008600" d="M895.12 332.62 894.62 334.62 899.38 337.88 899.88 335.38Z"/><path fill="#008200" d="M894.88 330.88 895.38 333.12 899.88 335.62 899.62 332.88Z"/><path fill="#008100" d="M894.38 329.38 894.88 331.12 899.62 333.12 898.88 330.88 895.38 329.38Z"/><path fill="#008400" d="M893.12 327.88 894.38 329.62 898.62 331.12 898.38 330.12 896.88 328.62Z"/><path fill="#008b00" d="M891.38 326.38 891.38 326.88 893.12 328.12 896.62 328.88 896.38 328.12 894.38 326.88Z"/><path fill="#009600" d="M889.38 325.38 889.38 325.88 894.62 327.38 894.62 326.88 892.12 325.62Z"/><path fill="#00a300" d="M886.62 324.38 886.62 324.88 888.88 325.62 891.38 325.88 891.38 325.38 889.12 324.62Z"/><path fill="#00b200" d="M887.12 324.38 887.12 324.88 888.12 324.88 888.12 324.38ZM883.88 323.88 883.88 324.38 886.62 324.62 886.62 324.12Z"/><path fill="#00c400" d="M882.88 323.88 882.88 324.38 884.12 324.38 884.12 323.88Z"/><path fill="#00d600" d="M878.88 323.88 878.88 324.38 880.38 324.38 880.38 323.88Z"/><path fill="#00e900" d="M878.12 324.12 874.38 324.62 874.38 325.12 878.12 324.62Z"/><path fill="#00fa00" d="M875.12 324.88 872.62 325.12 870.88 325.88 870.88 326.38 874.62 325.62Z"/><path fill="#00ff00" d="M873.38 325.62 870.12 326.12 867.62 327.62 867.62 328.12 871.12 327.38 873.38 326.12Z"/><path fill="#00ff00" d="M870.88 327.12 867.38 327.88 865.62 329.38 865.62 329.88 869.88 328.62Z"/><path fill="#00ff00" d="M869.62 328.38 865.38 329.62 864.12 332.12 868.62 330.38Z"/><path fill="#00ff00" d="M868.62 330.12 864.38 331.62 863.38 334.38 868.12 332.12Z"/><path fill="#00ff00" d="M868.38 331.62 863.38 334.12 863.62 336.62 864.62 336.38 868.38 333.62Z"/><path fill="#00ff00" d="M868.38 333.38 863.62 336.38 864.62 338.88 865.12 338.88 869.12 335.38Z"/><path fill="#00ff00" d="M869.38 335.12 867.88 335.62 864.62 338.62 866.12 340.88 866.62 340.88 870.38 336.88Z"/><path fill="#00ff00" d="M870.62 336.62 869.88 336.62 866.38 340.38 866.38 341.12 868.38 342.62 869.38 342.38 872.12 338.38 872.12 337.62Z"/><path fill="#00ff00" d="M872.38 337.88 871.38 338.38 868.62 342.38 868.62 342.88 871.38 344.12 872.12 343.88 874.38 338.88Z"/><path fill="#00ff00" d="M874.12 338.88 871.62 344.12 875.38 345.12 876.88 339.62Z"/><path fill="#00ff00" d="M876.62 339.62 875.12 344.12 875.12 345.38 878.88 345.88 879.62 340.12Z"/><path fill="#00ef00" d="M879.38 340.12 878.62 345.88 882.62 345.88 882.38 340.38Z"/><path fill="#00dd00" d="M882.38 340.12 882.38 345.88 886.38 345.62 885.38 340.12Z"/><path fill="#00ca00" d="M887.88 339.38 885.12 339.88 886.12 345.62 889.88 344.88 889.88 343.88Z"/><path fill="#00b900" d="M889.38 338.62 887.62 339.38 889.62 344.88 893.12 343.62 893.12 342.88 890.38 338.62Z"/><path fill="#00a800" d="M891.62 337.38 890.12 338.38 890.12 339.12 892.88 343.62 893.38 343.62 895.88 342.12 895.88 341.62 892.38 337.38Z"/><path fill="#009a00" d="M893.38 335.88 892.12 337.12 892.12 337.88 895.38 341.88 896.12 341.88 897.88 340.12 897.88 339.62 894.12 335.88Z"/><path fill="#008f00" d="M894.38 334.38 893.62 336.12 897.38 339.88 898.12 339.88 899.12 338.38 899.12 337.38 895.62 334.62Z"/><path fill="#005400" d="M899.62 335.38 899.12 338.12 902.62 341.88 903.12 341.88 903.62 338.62 900.12 335.38Z"/><path fill="#004e00" d="M899.62 333.38 899.62 335.62 901.88 337.88 903.62 338.88 903.62 336.12 900.38 333.38Z"/><path fill="#004d00" d="M898.62 331.12 899.38 333.38 902.38 335.88 903.38 336.12 902.38 333.38 899.38 331.12Z"/><path fill="#005100" d="M896.88 328.88 898.62 331.38 901.88 333.38 901.88 332.62 900.38 330.88Z"/><path fill="#005a00" d="M895.38 327.62 895.62 328.38 899.38 330.62 899.38 330.12Z"/><path fill="#00ff00" d="M867.62 327.88 864.88 329.38 862.62 331.38 862.62 331.88 865.38 330.38 867.62 328.38Z"/><path fill="#00ff00" d="M865.38 330.12 864.62 330.12 862.38 331.62 860.38 334.88 863.88 332.62 865.12 331.12Z"/><path fill="#00ff00" d="M864.38 331.88 860.38 334.62 859.62 337.62 863.62 334.62Z"/><path fill="#00ff00" d="M863.62 334.38 862.62 334.62 859.62 337.38 859.88 340.38 860.38 340.38 863.88 336.88Z"/><path fill="#00ff00" d="M863.88 336.62 863.38 336.62 859.88 340.12 860.88 343.12 861.88 342.62 864.88 338.88Z"/><path fill="#00ff00" d="M864.88 338.62 864.38 338.62 861.12 342.62 861.12 343.38 862.88 345.38 863.62 345.38 866.62 341.12Z"/><path fill="#00ff00" d="M866.88 340.88 865.62 341.38 863.12 345.12 863.12 345.62 865.62 347.62 866.38 347.62 868.88 343.12 868.88 342.38Z"/><path fill="#00ff00" d="M868.62 342.62 866.12 346.88 866.12 347.88 869.88 349.38 871.88 343.88Z"/><path fill="#00ff00" d="M871.62 343.88 869.62 348.62 869.62 349.62 873.88 350.62 875.12 344.88Z"/><path fill="#00ee00" d="M874.88 344.88 873.62 350.62 878.38 351.38 878.88 345.62Z"/><path fill="#00d800" d="M878.62 345.62 878.12 351.38 882.88 351.62 882.62 345.62Z"/><path fill="#00c100" d="M886.38 345.38 882.38 345.62 882.62 351.62 887.38 351.12Z"/><path fill="#00aa00" d="M890.12 344.62 886.12 345.38 887.12 351.12 891.62 350.12Z"/><path fill="#009300" d="M893.38 343.38 889.88 344.38 889.88 345.62 891.38 350.12 895.38 348.88 895.12 347.12Z"/><path fill="#007e00" d="M895.12 341.88 893.12 343.12 893.12 344.12 895.12 348.62 895.88 348.62 898.88 346.88 898.88 346.38 896.12 341.88Z"/><path fill="#006c00" d="M897.38 339.88 895.62 341.62 895.62 342.12 898.38 346.62 899.12 346.62 901.12 344.62 901.12 343.88 898.62 340.38Z"/><path fill="#005e00" d="M898.88 337.62 897.62 340.12 900.62 344.12 901.38 344.38 902.62 342.62 902.88 341.38 899.38 337.62Z"/><path fill="#004600" d="M903.88 338.88 903.38 338.88 902.88 340.62 903.12 342.62 903.62 342.62 904.12 340.62Z"/><path fill="#004d00" d="M903.38 336.38 903.38 339.12 904.12 339.62 904.12 336.88Z"/><path fill="#004e00" d="M902.12 333.62 903.12 336.38 903.88 336.62 902.88 333.88Z"/><path fill="#00ff00" d="M862.12 332.38 861.62 332.38 859.38 335.12 858.12 337.62 858.62 337.62Z"/><path fill="#00ff00" d="M860.62 334.88 860.12 334.88 857.62 337.88 856.88 341.12 857.88 340.62 859.88 337.88Z"/><path fill="#00ff00" d="M859.88 337.62 858.88 338.12 856.88 340.88 857.12 344.38 857.62 344.38 860.12 340.62Z"/><path fill="#00ff00" d="M860.38 340.38 859.38 340.62 857.12 344.12 858.12 347.38 858.88 347.38 861.12 343.62 861.12 342.12Z"/><path fill="#00ff00" d="M861.38 342.88 860.88 342.88 858.38 347.12 858.62 348.12 860.62 350.38 861.12 350.38 863.38 345.88 863.38 345.12Z"/><path fill="#00ff00" d="M863.12 345.38 860.88 349.62 860.88 350.62 863.12 352.38 864.38 352.62 866.12 348.38 866.12 347.38Z"/><path fill="#00fe00" d="M865.88 347.38 863.88 352.88 867.38 354.62 868.38 354.62 869.88 349.12Z"/><path fill="#00ea00" d="M869.38 349.38 867.88 354.88 872.88 356.12 873.88 350.38Z"/><path fill="#00d300" d="M873.62 350.38 872.62 356.38 877.88 357.12 878.38 351.12Z"/><path fill="#00ba00" d="M878.12 351.12 877.62 357.12 883.12 357.12 882.88 351.38Z"/><path fill="#009f00" d="M887.38 350.88 882.62 351.38 882.88 357.12 888.12 356.88Z"/><path fill="#008400" d="M891.62 349.88 887.12 350.88 887.88 356.62 892.88 355.62Z"/><path fill="#006900" d="M895.62 348.38 891.38 349.88 892.62 355.62 896.62 354.38 896.62 353.62 894.12 350.62 895.88 349.62Z"/><path fill="#005100" d="M899.12 346.88 898.12 346.62 895.38 348.38 895.38 349.38 896.12 349.62 899.12 347.88Z"/><path fill="#003c00" d="M901.38 344.12 900.88 344.12 898.62 346.38 898.88 347.62 901.88 345.38Z"/><path fill="#003a00" d="M903.12 341.62 902.38 341.88 901.12 343.88 901.38 345.12 901.88 345.12 903.12 343.38Z"/><path fill="#00f800" d="M857.88 338.38 857.38 338.38 855.12 345.12 855.62 345.12Z"/><path fill="#00ff00" d="M857.12 341.38 856.62 341.38 855.12 344.88 855.38 348.62 855.88 348.62 857.38 344.62Z"/><path fill="#00ff00" d="M857.38 344.38 856.88 344.38 855.38 348.38 856.62 352.38 857.12 352.38 858.62 347.88Z"/><path fill="#00fc00" d="M858.38 347.38 856.88 351.38 856.88 352.62 859.12 355.12 859.62 355.12 860.88 349.88 858.88 347.38Z"/><path fill="#00f100" d="M860.62 350.12 859.12 355.38 862.12 357.62 863.12 357.88 864.12 352.38Z"/><path fill="#00e000" d="M863.88 352.62 862.88 356.38 862.88 358.12 867.38 359.88 868.12 354.38Z"/><path fill="#00cb00" d="M867.88 354.62 867.12 360.12 872.12 361.38 872.88 355.88Z"/><path fill="#00b100" d="M872.62 356.12 871.88 361.62 877.62 362.38 877.88 356.88Z"/><path fill="#009500" d="M877.62 356.88 877.38 362.38 883.12 362.62 883.12 356.88Z"/><path fill="#007800" d="M882.88 356.88 882.88 362.62 888.62 362.12 888.12 356.62Z"/><path fill="#005a00" d="M892.88 355.38 887.88 356.38 888.38 362.12 893.62 360.88Z"/><path fill="#003d00" d="M896.88 353.88 892.62 355.38 893.38 360.88 898.38 359.12 897.88 355.88Z"/><path fill="#004300" d="M897.62 356.62 898.12 359.12 898.62 359.12 898.62 357.62 898.12 356.62Z"/><path fill="#00dc00" d="M855.38 345.88 854.88 345.88 854.38 349.62 854.62 353.62 855.12 353.62 855.62 349.62Z"/><path fill="#00dd00" d="M855.38 349.12 854.88 354.12 855.88 356.38 856.62 356.38 856.88 351.38 855.88 349.12Z"/><path fill="#00d800" d="M856.62 352.12 856.12 356.88 857.62 358.88 859.12 359.88 859.38 354.62 857.12 352.12Z"/><path fill="#00cc00" d="M859.12 355.12 858.88 360.12 862.62 362.62 862.88 357.38 859.88 355.12Z"/><path fill="#00bb00" d="M862.62 357.62 862.38 362.62 866.12 364.62 866.88 364.62 867.38 359.62Z"/><path fill="#00a500" d="M867.12 359.88 866.62 364.88 871.88 366.38 872.12 361.12Z"/><path fill="#008a00" d="M871.88 361.38 871.62 366.38 877.38 367.12 877.62 362.12Z"/><path fill="#006d00" d="M877.38 362.12 877.38 367.38 883.12 367.38 883.12 362.38Z"/><path fill="#004e00" d="M888.62 361.88 882.88 362.38 882.88 367.38 888.62 366.88Z"/><path fill="#003700" d="M893.88 360.62 888.38 361.88 888.38 366.88 894.12 365.62Z"/><path fill="#005500" d="M898.38 358.88 893.62 360.62 893.88 365.62 898.88 363.88Z"/><path fill="#007100" d="M898.38 358.62 898.38 363.12 898.62 363.62 899.38 363.62 898.88 358.62Z"/><path fill="#00b200" d="M854.88 353.88 855.38 358.38 856.38 360.62 856.88 360.62 856.38 356.12 855.38 353.88Z"/><path fill="#00ad00" d="M856.12 356.62 856.62 361.38 858.88 363.88 859.38 363.88 859.12 359.62 856.62 356.62Z"/><path fill="#00a200" d="M858.88 359.88 859.12 364.38 862.12 366.62 862.88 366.62 862.62 362.38Z"/><path fill="#009000" d="M862.38 362.38 862.62 366.88 867.38 368.88 866.88 364.38Z"/><path fill="#007a00" d="M866.62 364.62 867.12 369.12 872.12 370.38 872.12 366.38 870.12 365.38Z"/><path fill="#005f00" d="M871.62 366.12 871.88 370.62 877.62 371.38 877.38 366.88Z"/><path fill="#004200" d="M877.12 366.88 877.38 371.38 883.12 371.62 883.12 367.12Z"/><path fill="#004300" d="M888.62 366.62 882.88 367.12 882.88 371.62 888.62 371.12Z"/><path fill="#006200" d="M894.12 365.38 888.38 366.62 888.38 371.12 893.88 369.88Z"/><path fill="#008000" d="M898.88 363.62 893.88 365.38 893.62 369.88 898.38 368.12Z"/><path fill="#009b00" d="M899.62 363.12 898.62 363.38 898.12 368.12 898.88 367.88Z"/><path fill="#008200" d="M857.62 363.38 857.62 363.88 858.12 363.88 858.12 363.38ZM856.88 361.62 857.12 362.62 857.62 362.62 857.38 361.62ZM856.12 359.88 856.38 360.88 856.88 360.88 856.62 359.88Z"/><path fill="#007d00" d="M856.88 361.38 858.38 365.38 860.38 367.62 860.88 367.62 859.38 363.62 857.38 361.38Z"/><path fill="#007200" d="M859.38 364.12 860.62 368.12 864.12 370.38 863.12 366.62Z"/><path fill="#006100" d="M862.88 366.88 863.88 370.38 868.12 372.38 867.38 368.62Z"/><path fill="#004c00" d="M867.12 368.88 867.88 372.38 872.88 373.88 872.12 370.12Z"/><path fill="#003300" d="M871.88 370.38 872.62 373.88 877.88 374.62 877.62 371.12Z"/><path fill="#004f00" d="M877.38 371.12 877.62 374.62 883.12 374.88 883.12 371.38Z"/><path fill="#006d00" d="M888.62 370.88 882.88 371.38 882.88 374.88 888.12 374.38Z"/><path fill="#008b00" d="M893.62 369.62 888.62 370.62 888.12 371.38 887.88 374.38 892.88 373.38Z"/><path fill="#00a700" d="M898.38 367.88 893.38 369.62 892.88 373.12 896.88 371.88 897.88 370.12Z"/><path fill="#00c200" d="M898.88 367.62 898.12 367.88 897.62 369.62 898.12 369.62Z"/><path fill="#004900" d="M862.38 369.88 862.38 370.38 862.88 370.38 862.88 369.88ZM861.12 368.38 861.12 368.88 861.88 369.12 861.88 368.62ZM860.12 367.12 860.12 367.62 860.88 367.88 860.88 367.38ZM859.12 365.88 859.12 366.38 859.62 366.38 859.62 365.88Z"/><path fill="#003f00" d="M860.88 367.88 862.62 370.62 865.88 372.88 865.88 372.12 864.38 370.12Z"/><path fill="#003600" d="M864.12 370.38 866.12 373.38 869.62 374.88 869.62 374.12 868.38 372.12Z"/><path fill="#004900" d="M868.12 372.12 868.12 372.88 869.38 374.88 873.88 376.12 872.62 373.38Z"/><path fill="#006000" d="M872.62 373.62 873.62 376.12 878.38 376.88 877.88 374.38Z"/><path fill="#007a00" d="M877.62 374.38 878.12 376.88 882.88 377.12 883.12 374.62Z"/><path fill="#009500" d="M888.12 374.12 882.88 374.62 882.62 377.12 887.38 376.62Z"/><path fill="#00b000" d="M892.88 373.12 887.88 374.12 887.12 376.62 891.88 375.62Z"/><path fill="#00ca00" d="M896.62 371.62 892.62 372.88 891.62 375.62 893.88 374.88 896.62 372.12Z"/><path fill="#006700" d="M866.88 373.38 866.88 373.88 868.38 374.88 871.38 376.12 871.38 375.62 870.38 374.88Z"/><path fill="#007700" d="M869.62 374.62 869.62 375.12 871.38 376.38 875.12 377.38 875.12 376.88 873.88 375.88Z"/><path fill="#008b00" d="M873.62 375.88 873.62 376.38 874.88 377.38 878.88 377.88 878.38 376.62Z"/><path fill="#00a100" d="M878.12 376.62 878.12 377.38 879.12 378.12 882.88 377.88 882.88 376.88Z"/><path fill="#00b800" d="M887.38 376.38 882.62 376.88 882.38 378.12 886.38 377.88Z"/><path fill="#00d000" d="M891.62 375.38 887.62 376.12 886.38 377.12 886.38 377.62 889.88 377.12 891.62 375.88Z"/><path fill="#00e600" d="M894.62 374.38 893.62 374.38 889.88 376.38 889.88 376.88 893.12 375.88 894.62 374.88Z"/><path fill="#00fb00" d="M894.88 374.38 893.12 375.12 893.12 375.62 894.88 374.88Z"/><path fill="#ff0000" d="M1190.88 380.12 1183.12 397.12 1183.12 397.88 1205.38 401.62 1203.88 397.12 1203.88 385.38 1204.62 382.38Z"/><path fill="#750000" d="M1183.12 397.62 1183.12 421.88 1205.38 425.62 1205.38 401.38Z"/><path fill="#ff0000" d="M1202.88 347.62 1188.12 345.38 1156.62 415.88 1171.62 418.12 1202.62 349.38Z"/><path fill="#750000" d="M1156.62 415.62 1156.62 451.88 1171.38 454.38 1171.38 417.88Z"/><path fill="#ba0000" d="M1203.12 347.88 1202.38 348.38 1171.12 417.88 1171.12 454.12 1171.62 454.12 1185.88 422.62 1185.88 422.12 1183.88 421.88 1183.38 421.38 1183.38 397.62 1191.38 380.38 1203.12 382.38Z"/><path fill="#ff0000" d="M1203.62 384.88 1203.88 389.62 1205.62 393.12 1208.38 396.12 1211.12 398.12 1216.12 400.62 1225.88 402.88 1232.38 403.12 1237.62 402.62 1243.12 401.38 1247.12 399.88 1251.62 397.38 1255.38 393.88 1257.12 391.12 1257.88 388.38 1257.62 383.38 1255.88 379.88 1253.38 377.12 1250.38 374.88 1245.88 372.62 1241.12 371.12 1234.88 370.12 1224.62 370.38 1218.62 371.62 1214.62 373.12 1209.62 375.88 1206.38 378.88 1204.38 382.12Z"/><path fill="#c00000" d="M1257.88 388.12 1257.38 388.12 1256.88 390.12 1256.88 433.62 1257.38 433.62 1257.88 431.62Z"/><path fill="#c70000" d="M1203.62 425.12 1203.62 431.38 1204.12 431.38 1204.12 425.12ZM1203.62 387.88 1203.62 397.62 1204.12 397.62 1204.12 387.88Z"/><path fill="#c90000" d="M1203.88 389.38 1203.88 399.12 1205.12 401.62 1205.12 424.88 1203.88 425.12 1203.88 432.88 1205.12 435.62 1205.62 435.62 1205.62 392.12 1204.38 389.38Z"/><path fill="#c30000" d="M1205.38 392.38 1205.38 436.12 1207.62 438.62 1208.12 438.62 1208.12 395.12 1205.88 392.38Z"/><path fill="#b80000" d="M1207.88 395.38 1207.88 438.88 1211.62 441.38 1211.62 397.88Z"/><path fill="#a60000" d="M1211.38 397.88 1211.38 441.62 1216.12 443.62 1216.12 400.12Z"/><path fill="#900000" d="M1215.88 400.12 1215.88 443.62 1221.12 445.12 1221.12 401.62Z"/><path fill="#750000" d="M1220.88 401.62 1220.88 445.12 1226.62 446.12 1226.62 402.62Z"/><path fill="#580000" d="M1226.38 402.62 1226.38 446.12 1232.12 446.38 1232.12 402.88Z"/><path fill="#390000" d="M1237.88 402.12 1231.88 402.88 1231.88 446.38 1237.88 445.88Z"/><path fill="#4d0000" d="M1243.12 401.12 1237.62 402.12 1237.62 445.62 1243.12 444.62Z"/><path fill="#6b0000" d="M1247.88 399.12 1242.88 400.88 1242.88 444.62 1247.88 442.88Z"/><path fill="#860000" d="M1251.88 396.88 1247.62 399.12 1247.62 442.62 1251.88 440.38Z"/><path fill="#9f0000" d="M1255.12 393.88 1254.62 393.88 1251.62 396.62 1251.62 440.12 1252.62 439.88 1255.12 437.38Z"/><path fill="#b20000" d="M1257.12 390.88 1256.38 391.12 1254.88 393.62 1254.88 437.12 1255.38 437.12 1257.12 434.38Z"/><path fill="#0000ff" d="M1029.88 466.88 1022.12 484.62 1050.12 489.12 1048.12 485.62 1047.62 483.62 1047.62 481.88 1048.38 479.38 1050.88 475.88 1053.12 473.88 1056.88 471.62 1056.88 471.12Z"/><path fill="#000075" d="M1022.12 484.38 1022.12 508.62 1050.12 513.12 1047.12 509.12 1044.88 503.88 1044.38 500.38 1045.12 495.62 1046.88 492.38 1050.12 489.38 1050.12 488.88Z"/><path fill="#0000ff" d="M1042.12 434.38 1028.62 432.12 1027.12 432.38 996.12 501.12 995.88 502.62 1009.38 504.88 1010.88 504.62 1041.62 436.38Z"/><path fill="#000075" d="M995.88 502.38 995.88 538.62 1010.62 540.88 1010.62 504.62Z"/><path fill="#0000ba" d="M1042.12 434.88 1041.38 435.38 1010.38 504.38 1010.38 540.62 1011.12 540.12 1024.88 509.62 1024.62 508.62 1022.38 508.12 1022.38 484.62 1030.38 467.12 1042.12 468.88Z"/><path fill="#0000ff" d="M1066.88 472.88 1066.88 473.88 1068.62 475.12 1071.38 475.12 1072.88 473.88 1072.62 472.38 1071.38 471.62 1068.38 471.62Z"/><path fill="#0000ff" d="M1061.38 474.12 1067.12 473.38 1067.12 472.88 1061.62 472.88Z"/><path fill="#0000ff" d="M1067.12 473.12 1061.38 473.88 1061.38 475.12 1067.12 473.88Z"/><path fill="#0000ff" d="M1067.38 473.62 1061.62 474.88 1061.62 475.88 1063.38 475.88 1067.38 474.12Z"/><path fill="#0000ff" d="M1067.62 473.88 1066.62 473.88 1062.38 475.62 1061.88 476.38 1063.12 477.12 1067.12 474.88Z"/><path fill="#0000ff" d="M1067.88 474.12 1067.12 474.12 1062.88 476.62 1062.88 477.38 1064.38 477.88 1067.88 474.88Z"/><path fill="#0000ff" d="M1068.38 474.62 1067.62 474.38 1064.88 476.62 1063.88 478.12 1065.62 478.62Z"/><path fill="#0000ff" d="M1068.88 474.62 1067.62 475.12 1065.62 477.62 1065.38 478.88 1067.12 479.12 1068.88 475.62Z"/><path fill="#0000ff" d="M1069.62 474.88 1068.62 474.88 1066.88 479.12 1068.88 479.12Z"/><path fill="#0000ff" d="M1070.12 474.88 1069.12 475.12 1068.38 479.38 1070.38 479.38Z"/><path fill="#0000fe" d="M1069.88 474.88 1070.12 479.38 1072.12 479.38 1070.88 474.88Z"/><path fill="#0000f7" d="M1070.62 474.88 1071.88 479.38 1073.62 479.12 1073.62 478.12 1071.88 475.38Z"/><path fill="#0000f1" d="M1071.12 474.62 1071.12 475.38 1073.38 478.88 1074.88 478.62 1075.12 477.88 1071.88 474.62Z"/><path fill="#0000eb" d="M1071.62 474.38 1071.62 475.12 1074.88 478.38 1076.38 477.88 1076.38 477.12 1072.88 474.62Z"/><path fill="#0000e6" d="M1072.12 474.12 1072.12 474.88 1075.62 477.38 1076.62 477.62 1077.38 476.88 1077.12 476.12 1073.12 474.12Z"/><path fill="#0000e2" d="M1072.38 473.62 1072.38 474.38 1076.88 476.62 1077.62 476.62 1078.12 475.38Z"/><path fill="#0000df" d="M1072.62 473.38 1072.62 474.12 1077.12 475.62 1078.12 475.62 1078.38 474.38Z"/><path fill="#0000de" d="M1072.62 472.88 1072.62 473.62 1078.38 474.62 1078.38 473.38Z"/><path fill="#0000dd" d="M1072.38 472.62 1072.88 473.38 1078.12 473.62 1077.88 472.38Z"/><path fill="#0000df" d="M1077.88 472.12 1077.12 471.38 1072.38 472.12 1072.38 472.88 1077.88 472.62Z"/><path fill="#0000e1" d="M1076.88 471.12 1075.38 470.62 1071.88 471.88 1071.88 472.38 1072.62 472.62 1076.62 471.88Z"/><path fill="#0000e5" d="M1075.88 470.38 1073.88 470.12 1071.38 471.62 1071.38 472.12 1072.12 472.38 1075.62 471.12Z"/><path fill="#0000e9" d="M1074.62 469.88 1072.62 469.62 1070.88 471.38 1070.88 471.88 1072.12 471.88 1074.62 470.38Z"/><path fill="#0000ef" d="M1073.12 469.38 1071.12 469.12 1070.12 471.88 1071.12 471.88 1073.12 469.88Z"/><path fill="#0000f5" d="M1071.38 469.12 1069.38 469.12 1069.62 471.88 1070.62 471.62Z"/><path fill="#0000fb" d="M1067.88 469.12 1067.88 470.12 1068.88 471.88 1069.88 471.88 1069.62 469.12Z"/><path fill="#0000ff" d="M1066.12 469.62 1066.12 470.12 1068.12 471.88 1069.12 471.88 1068.12 469.38Z"/><path fill="#0000ff" d="M1064.62 470.12 1064.62 470.62 1067.62 472.12 1068.62 472.12 1068.62 471.62 1066.38 469.62Z"/><path fill="#0000ff" d="M1063.38 470.88 1063.38 471.38 1068.12 472.38 1067.88 471.62 1064.88 470.12Z"/><path fill="#0000ff" d="M1062.38 471.62 1062.38 472.12 1067.62 472.62 1067.38 471.88 1063.62 470.88Z"/><path fill="#0000ff" d="M1061.62 473.12 1067.38 473.12 1067.38 472.38 1062.12 471.88Z"/><path fill="#0000ff" d="M1061.88 472.88 1056.62 473.88 1056.12 475.88 1061.38 474.38 1061.88 473.88Z"/><path fill="#0000ff" d="M1061.62 473.88 1056.38 475.38 1056.38 477.38 1061.62 475.38Z"/><path fill="#0000ff" d="M1061.88 474.88 1056.38 477.12 1056.88 478.88 1057.62 479.12 1062.12 476.38Z"/><path fill="#0000ff" d="M1062.88 476.62 1062.38 476.12 1061.38 476.12 1057.38 478.62 1057.12 479.38 1058.12 480.62 1058.88 480.62 1062.62 477.62Z"/><path fill="#0000ff" d="M1064.12 477.62 1062.62 476.88 1059.12 479.62 1058.38 480.88 1059.88 481.88 1060.62 481.88 1064.12 478.12Z"/><path fill="#0000ff" d="M1065.38 478.38 1063.62 477.88 1060.12 481.62 1060.12 482.12 1062.62 483.12Z"/><path fill="#0000ff" d="M1066.62 478.62 1064.88 478.62 1062.38 483.12 1064.38 483.88 1065.38 483.62 1066.88 479.62Z"/><path fill="#0000ff" d="M1066.62 478.88 1064.88 483.88 1067.88 484.38 1068.62 479.12Z"/><path fill="#0000fe" d="M1068.38 479.12 1067.62 484.38 1070.62 484.38 1070.38 479.12Z"/><path fill="#0000f2" d="M1070.12 479.12 1070.38 484.38 1073.38 484.12 1072.38 479.38Z"/><path fill="#0000e5" d="M1072.12 478.88 1071.88 479.62 1073.12 484.12 1076.12 483.62 1073.88 478.62Z"/><path fill="#0000d8" d="M1073.62 478.62 1073.62 479.38 1075.88 483.62 1078.38 482.62 1078.12 481.62 1075.38 478.12Z"/><path fill="#0000cd" d="M1075.12 477.88 1075.12 478.62 1078.12 482.62 1080.38 481.62 1080.38 480.88 1076.62 477.38Z"/><path fill="#0000c3" d="M1076.38 477.12 1076.38 477.88 1080.12 481.38 1081.12 481.12 1082.12 480.12 1082.12 479.62 1077.62 476.38Z"/><path fill="#0000bb" d="M1077.38 476.12 1077.88 477.38 1081.38 479.88 1082.12 479.88 1083.12 478.62 1082.88 477.88 1078.62 475.62 1077.62 475.62Z"/><path fill="#0000b6" d="M1078.12 474.38 1077.88 475.88 1083.12 478.38 1083.62 476.38Z"/><path fill="#0000b3" d="M1078.12 473.38 1078.38 474.88 1083.62 476.62 1083.38 474.62Z"/><path fill="#0000b2" d="M1077.62 472.38 1077.88 473.62 1083.38 474.88 1082.88 473.12Z"/><path fill="#0000b4" d="M1076.88 471.38 1077.62 472.62 1082.62 473.38 1081.62 471.62Z"/><path fill="#0000b9" d="M1075.88 470.62 1076.62 471.62 1081.38 471.88 1081.38 471.38 1079.88 470.38Z"/><path fill="#0000c0" d="M1074.38 469.88 1074.38 470.38 1075.62 470.88 1079.62 470.62 1079.62 470.12 1077.62 469.12Z"/><path fill="#0000c9" d="M1072.88 469.38 1072.88 469.88 1073.88 470.12 1077.12 469.62 1076.88 468.88 1074.38 468.38Z"/><path fill="#0000d4" d="M1071.12 469.38 1073.38 469.62 1074.38 469.12 1074.62 468.38 1071.88 467.88Z"/><path fill="#0000e0" d="M1069.12 467.88 1069.38 469.38 1071.38 469.38 1072.12 468.38 1072.12 467.88Z"/><path fill="#0000ed" d="M1066.38 468.12 1066.38 468.62 1067.62 469.62 1069.62 469.38 1069.38 467.88Z"/><path fill="#0000fa" d="M1063.88 468.62 1063.88 469.12 1065.62 469.88 1067.88 469.62 1067.88 469.12 1066.62 468.12Z"/><path fill="#0000ff" d="M1061.62 469.38 1061.88 470.12 1065.88 470.12 1065.88 469.38 1064.12 468.62Z"/><path fill="#0000ff" d="M1059.38 471.12 1063.88 471.12 1064.62 470.12 1061.12 469.62 1059.38 470.62Z"/><path fill="#0000ff" d="M1057.62 472.62 1062.62 472.12 1063.38 470.88 1059.12 470.88 1057.62 472.12Z"/><path fill="#0000ff" d="M1062.38 471.88 1057.88 472.12 1057.12 472.88 1056.88 474.12 1061.88 473.12Z"/><path fill="#0000ff" d="M1056.88 473.88 1052.38 475.62 1051.62 478.12 1052.38 478.12 1056.62 475.62Z"/><path fill="#0000ff" d="M1056.62 475.88 1055.88 475.62 1051.62 477.88 1051.88 480.38 1052.62 480.38 1056.38 477.88Z"/><path fill="#0000ff" d="M1056.62 477.38 1051.88 480.12 1052.62 482.62 1053.38 482.62 1057.38 479.12Z"/><path fill="#0000ff" d="M1057.38 478.88 1056.88 478.88 1052.88 482.38 1052.88 483.12 1054.38 484.88 1054.88 484.88 1058.62 480.88Z"/><path fill="#0000ff" d="M1059.12 480.62 1058.12 480.62 1054.62 484.38 1054.62 485.12 1056.62 486.62 1057.88 485.88 1060.38 482.12 1060.38 481.62Z"/><path fill="#0000ff" d="M1060.88 481.88 1059.88 481.88 1056.88 486.12 1057.12 486.88 1060.12 488.12 1062.62 483.38 1062.38 482.62Z"/><path fill="#0000ff" d="M1062.38 482.88 1059.88 487.38 1059.88 488.12 1063.38 489.12 1065.12 483.62Z"/><path fill="#0000ff" d="M1064.88 483.62 1063.12 489.12 1067.12 489.62 1067.88 484.12Z"/><path fill="#0000ef" d="M1067.62 484.12 1066.88 489.62 1070.88 489.88 1070.62 484.12Z"/><path fill="#0000dd" d="M1073.62 483.88 1070.38 484.12 1070.62 489.88 1074.62 489.62Z"/><path fill="#0000ca" d="M1073.38 483.88 1074.38 489.38 1077.88 488.88 1078.12 487.88 1076.38 483.62 1075.12 483.38Z"/><path fill="#0000b9" d="M1075.88 483.38 1077.88 488.62 1081.38 487.62 1081.38 486.88 1078.62 482.38Z"/><path fill="#0000a8" d="M1080.12 481.12 1078.38 482.12 1078.38 483.12 1080.62 486.88 1081.62 487.38 1083.88 486.12 1084.12 485.38 1080.88 481.38Z"/><path fill="#00009a" d="M1081.62 479.88 1080.38 480.88 1080.38 481.62 1083.62 485.62 1084.38 485.62 1086.12 484.12 1086.12 483.62 1082.38 479.88Z"/><path fill="#00008f" d="M1082.62 478.38 1081.88 480.12 1085.62 483.88 1086.38 483.88 1087.38 481.38 1083.62 478.38Z"/><path fill="#000086" d="M1083.12 476.62 1082.88 478.62 1087.62 481.88 1088.12 479.12 1084.12 476.62Z"/><path fill="#000082" d="M1083.12 474.88 1083.38 476.88 1087.38 479.38 1088.12 479.38 1087.88 476.88Z"/><path fill="#000081" d="M1082.62 473.12 1083.12 475.12 1087.88 477.12 1086.88 474.62Z"/><path fill="#000084" d="M1081.38 471.62 1082.38 473.38 1086.88 474.88 1085.38 472.62Z"/><path fill="#00008b" d="M1079.62 470.38 1079.62 470.88 1081.62 472.12 1084.88 472.88 1084.88 472.38 1082.88 470.88Z"/><path fill="#000096" d="M1077.38 469.12 1077.38 469.62 1079.38 470.62 1082.38 471.12 1082.38 470.62 1079.88 469.38Z"/><path fill="#0000a3" d="M1075.12 468.38 1075.12 468.88 1076.62 469.38 1079.12 469.62 1079.12 469.12 1077.62 468.62Z"/><path fill="#0000b2" d="M1072.38 467.88 1072.38 468.38 1075.38 468.62 1075.38 468.12Z"/><path fill="#0000c4" d="M1068.88 467.62 1068.88 468.12 1069.62 468.12 1069.62 467.62Z"/><path fill="#0000d6" d="M1066.12 467.88 1066.12 468.38 1067.62 468.38 1067.62 467.88ZM1068.62 467.62 1068.62 468.12 1069.12 468.12 1069.12 467.62Z"/><path fill="#0000e9" d="M1065.88 468.12 1062.12 468.62 1062.12 469.12 1065.88 468.62Z"/><path fill="#0000fa" d="M1063.88 468.62 1061.38 468.88 1058.62 469.88 1058.62 470.38 1061.88 469.88 1063.88 469.12Z"/><path fill="#0000ff" d="M1061.38 469.62 1058.12 470.12 1056.12 471.38 1056.12 471.88 1059.62 471.12 1061.38 470.12Z"/><path fill="#0000ff" d="M1059.38 470.88 1055.62 471.62 1053.88 473.38 1053.88 473.88 1057.88 472.62 1059.38 471.38Z"/><path fill="#0000ff" d="M1057.88 472.38 1053.62 473.62 1052.38 475.88 1057.12 474.12Z"/><path fill="#0000ff" d="M1052.38 475.88 1048.62 478.38 1047.88 481.38 1049.12 480.88 1051.88 478.38Z"/><path fill="#0000ff" d="M1051.88 478.12 1047.88 481.12 1048.12 484.12 1048.62 484.12 1052.12 480.62Z"/><path fill="#0000ff" d="M1052.12 480.38 1051.62 480.38 1048.12 483.88 1049.12 486.88 1049.62 486.88 1053.12 482.88Z"/><path fill="#0000ff" d="M1053.12 482.62 1052.62 482.62 1049.38 486.38 1049.38 487.38 1051.12 489.38 1052.12 488.88 1054.62 485.12 1054.38 483.88Z"/><path fill="#0000ff" d="M1054.88 484.62 1054.12 484.88 1051.38 488.88 1051.38 489.62 1054.12 491.62 1054.62 491.62 1057.12 486.88 1057.12 486.38Z"/><path fill="#0000ff" d="M1056.88 486.38 1054.38 490.88 1054.38 491.88 1058.12 493.38 1060.12 487.88Z"/><path fill="#0000ff" d="M1059.88 487.88 1057.88 492.38 1057.88 493.38 1062.12 494.62 1063.38 488.88Z"/><path fill="#0000ee" d="M1063.12 488.88 1061.88 494.62 1066.62 495.38 1067.12 489.38Z"/><path fill="#0000d8" d="M1066.88 489.38 1066.38 495.38 1071.12 495.62 1070.88 489.62Z"/><path fill="#0000c1" d="M1070.62 489.62 1070.88 495.38 1075.62 495.12 1074.62 489.38Z"/><path fill="#0000aa" d="M1078.12 488.38 1074.38 489.12 1075.38 495.12 1079.88 494.12Z"/><path fill="#000093" d="M1081.62 487.38 1080.38 487.38 1077.88 488.38 1079.62 494.12 1083.62 492.62 1083.38 491.12Z"/><path fill="#00007e" d="M1084.12 485.62 1081.12 487.12 1083.38 492.62 1086.88 490.88 1086.88 489.88Z"/><path fill="#00006c" d="M1085.62 483.88 1083.88 485.38 1083.88 486.12 1086.62 490.62 1087.12 490.62 1089.38 488.62 1089.38 487.62 1086.88 484.38Z"/><path fill="#00005e" d="M1087.12 481.62 1085.88 484.12 1089.12 488.38 1089.62 488.38 1091.12 486.12 1091.12 485.38 1087.62 481.62Z"/><path fill="#000054" d="M1087.88 479.38 1087.38 482.12 1090.62 485.62 1091.38 485.62 1091.88 482.62 1088.38 479.38Z"/><path fill="#00004e" d="M1087.62 477.12 1087.88 479.62 1091.38 482.88 1091.88 482.88 1091.62 479.88 1088.38 477.12Z"/><path fill="#00004d" d="M1086.88 474.88 1087.62 477.38 1091.62 480.12 1090.62 477.38Z"/><path fill="#000051" d="M1085.12 472.88 1086.62 475.12 1089.38 477.12 1090.38 477.38 1088.38 474.62Z"/><path fill="#00005a" d="M1083.62 471.62 1083.62 472.12 1087.38 474.38 1087.38 473.88 1085.38 472.38Z"/><path fill="#0000ff" d="M1055.38 472.12 1052.62 473.62 1050.88 475.62 1050.38 475.62 1050.38 476.12 1054.12 473.88Z"/><path fill="#0000ff" d="M1053.88 473.62 1050.12 475.88 1048.88 478.38 1049.62 478.38 1052.62 476.12Z"/><path fill="#0000ff" d="M1048.88 478.62 1048.12 478.88 1047.38 482.12 1048.12 481.62Z"/><path fill="#0000ff" d="M1047.62 481.38 1047.38 484.12 1047.62 484.88 1048.12 484.88 1048.38 483.12 1048.12 481.38Z"/><path fill="#0000ff" d="M1047.88 484.12 1047.88 486.12 1048.62 487.62 1049.12 487.62 1049.38 486.12 1048.62 484.38Z"/><path fill="#0000ff" d="M1049.62 486.62 1048.88 487.12 1048.88 488.12 1049.62 489.12 1047.12 491.38 1047.12 492.38 1048.62 494.12 1049.38 494.12 1051.62 489.62Z"/><path fill="#0000ff" d="M1051.12 489.38 1048.88 494.38 1051.88 496.62 1052.62 496.62 1054.38 492.12 1054.38 491.12 1052.38 489.62Z"/><path fill="#0000fe" d="M1054.12 491.38 1052.12 496.88 1056.62 498.62 1057.88 492.88Z"/><path fill="#0000ea" d="M1057.62 493.12 1056.38 497.38 1056.38 498.88 1061.12 500.12 1062.12 494.38Z"/><path fill="#0000d3" d="M1061.88 494.38 1060.88 500.12 1066.12 500.88 1066.38 495.12Z"/><path fill="#0000ba" d="M1066.12 495.12 1065.88 500.88 1071.12 501.12 1071.12 495.38Z"/><path fill="#00009f" d="M1075.62 494.88 1070.88 495.12 1070.88 501.12 1076.38 500.62Z"/><path fill="#000084" d="M1079.88 493.88 1075.38 494.88 1076.12 500.62 1081.12 499.62Z"/><path fill="#000069" d="M1083.88 492.38 1079.62 493.88 1080.88 499.62 1085.62 497.88Z"/><path fill="#000051" d="M1087.12 490.38 1083.62 492.12 1083.62 493.38 1085.12 497.62 1086.12 497.62 1089.12 495.88 1089.12 494.88Z"/><path fill="#00003c" d="M1089.62 488.12 1086.88 490.12 1086.88 491.12 1088.88 495.62 1089.38 495.62 1092.12 493.12Z"/><path fill="#00003a" d="M1090.88 485.62 1089.88 486.88 1089.38 488.62 1091.62 492.88 1092.12 492.88 1093.62 490.88 1093.88 489.62 1091.62 485.88Z"/><path fill="#000046" d="M1091.62 482.88 1090.88 485.88 1093.38 489.88 1094.12 489.88 1094.62 486.38 1092.38 483.12Z"/><path fill="#00004d" d="M1091.38 480.12 1091.62 483.12 1094.38 487.12 1094.88 487.12 1094.62 483.62 1092.38 480.62Z"/><path fill="#00004e" d="M1090.38 477.62 1091.38 480.38 1093.88 483.62 1094.38 483.62 1093.12 480.38 1091.38 478.12Z"/><path fill="#0000ff" d="M1050.12 476.62 1049.38 476.88 1048.62 478.62 1049.12 478.62Z"/><path fill="#0000ff" d="M1045.88 494.12 1045.38 494.12 1044.88 496.12 1045.38 496.12Z"/><path fill="#0000fc" d="M1046.88 491.62 1045.62 493.62 1045.12 496.62 1047.38 499.12 1047.88 499.12 1049.12 493.88 1047.38 491.62Z"/><path fill="#0000f1" d="M1048.88 494.12 1047.62 497.88 1047.62 499.38 1050.12 501.38 1051.38 501.62 1052.38 496.38 1049.88 494.38Z"/><path fill="#0000e0" d="M1052.12 496.62 1050.88 501.88 1055.62 503.88 1056.38 498.38Z"/><path fill="#0000cb" d="M1056.12 498.38 1055.38 503.88 1060.38 505.38 1061.12 499.88Z"/><path fill="#0000b1" d="M1060.88 499.88 1060.12 505.38 1065.88 506.38 1066.12 500.62Z"/><path fill="#000095" d="M1065.88 500.62 1065.62 506.38 1071.38 506.38 1071.12 500.88Z"/><path fill="#000078" d="M1076.38 500.38 1070.88 500.88 1071.12 506.38 1076.88 505.88Z"/><path fill="#00005a" d="M1081.12 499.38 1076.12 500.38 1076.62 505.88 1081.88 504.88Z"/><path fill="#00003d" d="M1085.62 497.62 1080.88 499.38 1081.62 504.88 1086.62 503.12Z"/><path fill="#000043" d="M1089.38 495.38 1085.38 497.38 1086.38 502.88 1087.12 502.88 1090.62 500.62Z"/><path fill="#00005a" d="M1092.12 492.88 1089.12 495.12 1090.12 500.38 1091.38 500.12 1093.62 497.88Z"/><path fill="#00006c" d="M1093.38 490.12 1091.88 492.38 1091.88 493.62 1093.12 497.38 1093.88 497.62 1095.38 495.38 1095.62 494.12 1094.12 490.12Z"/><path fill="#00007a" d="M1094.38 486.88 1093.62 490.38 1095.12 494.38 1095.62 494.38 1096.38 492.38 1096.38 490.38 1094.88 486.88Z"/><path fill="#000081" d="M1094.38 484.12 1094.38 486.88 1096.12 491.38 1096.62 491.38 1096.38 487.88 1094.88 484.12Z"/><path fill="#0000dd" d="M1045.12 495.88 1044.62 495.88 1044.12 500.38 1044.88 500.12Z"/><path fill="#0000d8" d="M1044.88 495.88 1044.38 500.88 1046.62 503.62 1047.38 503.62 1047.62 498.62 1045.38 495.88Z"/><path fill="#0000cc" d="M1047.38 498.88 1046.88 503.88 1050.88 506.62 1051.12 501.38Z"/><path fill="#0000bb" d="M1050.88 501.62 1050.62 506.62 1055.12 508.62 1055.38 503.62 1051.62 501.62Z"/><path fill="#0000a5" d="M1055.12 503.62 1054.88 508.62 1060.12 510.12 1060.38 505.12Z"/><path fill="#00008a" d="M1060.12 505.12 1059.88 510.38 1065.62 511.12 1065.88 506.12Z"/><path fill="#00006d" d="M1065.62 506.12 1065.38 511.12 1071.38 511.38 1071.38 506.12Z"/><path fill="#00004e" d="M1076.88 505.62 1071.12 506.12 1071.12 511.38 1076.88 510.88Z"/><path fill="#000037" d="M1081.88 504.62 1076.62 505.62 1076.62 510.88 1082.12 509.62Z"/><path fill="#000055" d="M1086.62 502.88 1085.62 502.88 1081.62 504.62 1081.88 509.62 1087.12 507.88Z"/><path fill="#000071" d="M1090.62 500.38 1086.38 502.62 1086.62 507.62 1087.38 507.62 1091.12 505.38Z"/><path fill="#000088" d="M1093.62 497.62 1093.12 497.62 1090.38 500.12 1090.88 505.12 1091.38 505.12 1094.12 502.62Z"/><path fill="#00009c" d="M1095.62 494.62 1095.12 494.62 1093.38 497.38 1093.88 502.38 1094.38 502.38 1096.12 499.62Z"/><path fill="#0000aa" d="M1096.62 491.12 1096.12 491.12 1095.38 493.88 1095.88 499.12 1096.38 499.12 1097.12 496.38Z"/><path fill="#0000b1" d="M1096.62 494.38 1096.62 495.12 1097.12 495.12 1097.12 494.38ZM1096.38 491.62 1096.38 493.12 1096.88 493.12 1096.88 491.62ZM1096.12 489.62 1096.12 491.12 1096.62 491.12 1096.62 489.62Z"/><path fill="#0000b2" d="M1044.62 503.38 1044.62 504.38 1045.12 504.38 1045.12 503.38ZM1044.38 501.38 1044.38 502.62 1044.88 502.62 1044.88 501.38ZM1044.12 500.12 1044.12 500.88 1044.62 500.88 1044.62 500.12Z"/><path fill="#0000ad" d="M1044.38 500.62 1044.88 505.12 1046.38 507.12 1047.62 507.88 1047.38 503.88 1045.12 500.88Z"/><path fill="#0000a2" d="M1046.88 503.62 1047.38 508.12 1050.12 510.38 1051.12 510.62 1050.88 506.38Z"/><path fill="#000090" d="M1050.62 506.38 1050.88 510.88 1055.38 512.88 1055.12 508.38Z"/><path fill="#00007a" d="M1054.88 508.38 1055.12 512.88 1060.38 514.38 1060.12 509.88Z"/><path fill="#00005f" d="M1059.88 510.12 1060.12 514.38 1065.88 515.38 1065.62 510.88Z"/><path fill="#000042" d="M1065.38 510.88 1065.62 515.38 1071.38 515.38 1071.38 511.12Z"/><path fill="#000043" d="M1076.88 510.62 1071.12 511.12 1071.12 515.38 1076.62 515.12Z"/><path fill="#000062" d="M1082.12 509.38 1076.62 510.62 1076.62 514.88 1081.88 513.88Z"/><path fill="#000080" d="M1086.88 507.62 1081.88 509.38 1081.62 513.88 1086.62 512.12Z"/><path fill="#00009b" d="M1091.12 505.12 1086.62 507.62 1086.38 511.88 1087.12 511.88 1090.62 509.62Z"/><path fill="#0000b3" d="M1094.12 502.38 1093.62 502.38 1090.88 504.88 1090.38 509.38 1091.38 509.12 1093.62 506.88Z"/><path fill="#0000c7" d="M1096.12 499.38 1095.38 499.62 1093.88 502.12 1093.38 506.62 1093.88 506.62 1095.62 503.88Z"/><path fill="#0000d4" d="M1097.12 496.12 1096.62 496.12 1095.38 503.12 1095.88 503.12Z"/><path fill="#00007d" d="M1044.88 504.88 1046.88 509.62 1048.62 511.62 1049.12 511.62 1047.62 507.62 1045.38 504.88Z"/><path fill="#000072" d="M1047.38 507.88 1048.88 511.88 1051.62 514.12 1052.38 514.12 1051.38 510.62Z"/><path fill="#000061" d="M1051.12 510.62 1052.12 514.38 1056.38 516.12 1055.62 512.62Z"/><path fill="#00004c" d="M1055.38 512.62 1056.12 516.38 1061.12 517.62 1060.38 514.12Z"/><path fill="#000033" d="M1060.12 514.12 1060.88 517.88 1066.12 518.62 1065.88 515.12Z"/><path fill="#00004f" d="M1065.62 515.12 1065.88 518.62 1071.12 518.62 1071.38 515.12Z"/><path fill="#00006d" d="M1076.88 514.62 1071.12 515.12 1070.88 518.62 1076.38 518.38Z"/><path fill="#00008b" d="M1081.88 513.62 1076.62 514.62 1076.12 518.12 1081.12 517.12Z"/><path fill="#0000a7" d="M1086.62 511.88 1085.62 511.88 1081.88 513.38 1080.88 517.12 1085.38 515.62Z"/><path fill="#0000c2" d="M1090.62 509.38 1086.38 511.62 1085.38 515.38 1089.38 513.12Z"/><path fill="#0000d9" d="M1093.62 506.62 1093.12 506.62 1090.38 509.12 1089.12 512.88 1089.88 512.88 1092.12 510.62Z"/><path fill="#0000eb" d="M1095.62 503.62 1095.12 503.62 1093.62 505.88 1091.88 510.38 1092.38 510.38 1093.88 508.12Z"/><path fill="#000049" d="M1050.88 514.12 1050.88 514.62 1051.38 514.62 1051.38 514.12ZM1049.88 512.88 1049.88 513.38 1050.38 513.38 1050.38 512.88ZM1048.62 511.38 1048.62 511.88 1049.38 512.12 1049.38 511.62ZM1047.62 510.12 1047.62 510.62 1048.12 510.62 1048.12 510.12Z"/><path fill="#00003f" d="M1049.12 511.88 1051.38 515.12 1053.38 516.62 1054.12 516.62 1052.38 513.88Z"/><path fill="#000036" d="M1052.38 514.12 1052.38 514.88 1054.12 517.12 1057.88 518.62 1056.38 515.88Z"/><path fill="#000049" d="M1056.38 516.12 1056.38 516.88 1057.62 518.88 1062.12 520.12 1061.12 517.38Z"/><path fill="#000060" d="M1060.88 517.62 1061.88 520.12 1066.62 520.88 1066.12 518.38Z"/><path fill="#00007a" d="M1065.88 518.38 1066.38 520.88 1071.12 520.88 1071.12 518.38Z"/><path fill="#000095" d="M1076.38 518.12 1070.88 518.38 1070.88 520.88 1075.62 520.62Z"/><path fill="#0000b0" d="M1081.12 516.88 1076.12 517.88 1075.38 520.38 1079.88 519.62 1081.12 517.62Z"/><path fill="#0000ca" d="M1085.62 515.12 1080.88 516.88 1079.62 519.62 1083.88 518.12Z"/><path fill="#0000e2" d="M1089.12 513.12 1085.62 514.88 1083.62 517.88 1084.38 517.88 1086.88 516.38Z"/><path fill="#0000f7" d="M1091.88 510.62 1088.88 512.88 1087.12 515.62 1089.88 513.62Z"/><path fill="#000067" d="M1054.88 517.12 1054.88 517.62 1056.38 518.62 1059.38 519.88 1059.38 519.38 1058.38 518.62Z"/><path fill="#000077" d="M1058.12 518.62 1058.12 519.12 1059.38 520.12 1063.12 521.12 1062.38 519.88Z"/><path fill="#00008b" d="M1062.12 519.88 1063.12 521.38 1067.12 521.88 1066.38 520.38Z"/><path fill="#0000a1" d="M1066.38 520.62 1066.88 521.88 1070.88 522.12 1071.12 520.62Z"/><path fill="#0000b8" d="M1075.38 520.38 1070.88 520.62 1070.62 522.12 1074.88 521.62Z"/><path fill="#0000d0" d="M1079.62 519.38 1075.38 520.12 1074.62 521.62 1078.38 520.88 1079.62 519.88Z"/><path fill="#0000e6" d="M1083.38 517.88 1079.38 519.38 1078.38 520.12 1078.38 520.62 1081.62 519.62 1083.12 518.62Z"/><path fill="#0000fb" d="M1084.88 517.12 1081.62 518.88 1081.62 519.38 1084.88 517.62ZM1085.62 516.38 1085.62 516.88 1086.12 516.88 1086.12 516.38Z"/><path fill="#50636a" d="M965.38 475.12 968.62 481.62 969.88 487.88 969.38 491.88 966.38 498.62 966.38 499.62 985.62 502.62 985.62 478.38Z"/><path fill="#afdae8" d="M973.12 457.38 965.88 473.38 965.38 475.38 985.62 478.62 985.62 459.38Z"/><path fill="#7e9da7" d="M1006.38 471.62 1005.88 471.62 1001.88 480.62 1001.88 488.62 1002.38 488.62 1006.62 479.12 1005.88 475.12 1006.88 473.62 1006.88 473.12 1006.12 472.88Z"/><path fill="#50636a" d="M985.38 446.88 985.38 543.38 998.12 545.62 1000.12 545.62 1000.12 538.88 997.12 538.62 996.12 538.12 996.12 502.38 1000.12 493.62 1000.12 449.38Z"/><path fill="#afdae8" d="M1011.88 422.88 997.12 420.62 985.38 446.38 985.38 447.12 1000.12 449.62 1011.62 424.38Z"/><path fill="#7e9da7" d="M1002.88 539.38 999.88 539.12 999.88 545.38 1000.38 545.38ZM1011.88 423.38 1011.38 423.38 999.88 448.88 999.88 493.12 1000.38 493.12 1002.12 489.38 1002.12 481.12 1005.12 474.62 1005.62 475.12 1005.38 476.12 1005.88 476.38 1005.38 476.88 1005.38 478.62 1005.88 479.38 1005.38 480.62 1005.88 480.62 1011.88 467.62Z"/><path fill="#50636a" d="M918.88 474.62 916.38 477.88 914.88 481.38 914.38 484.62 914.88 491.38 916.38 495.62 919.62 500.62 922.88 504.12 927.12 507.38 932.38 510.12 937.38 511.88 941.62 512.62 949.62 512.62 953.38 511.88 958.62 509.62 961.62 507.38 964.62 503.62 966.38 499.62 966.88 496.12 966.38 489.88 964.88 485.88 962.12 481.38 957.62 476.62 953.12 473.38 948.88 471.12 943.62 469.38 939.12 468.62 931.62 468.62 927.12 469.62 923.62 471.12Z"/><path fill="#b8e5f4" d="M933.62 443.12 933.12 443.12 931.62 444.88 929.62 448.38 916.62 477.88 917.12 477.88 919.12 475.38 920.38 473.12Z"/><path fill="#c4f5ff" d="M937.38 440.12 936.38 440.38 933.38 442.88 919.38 474.38 920.38 474.12 923.38 471.62Z"/><path fill="#c9fcff" d="M941.88 438.12 937.12 439.88 922.88 471.88 927.88 469.62Z"/><path fill="#c8f9ff" d="M946.88 437.12 941.88 437.88 941.38 438.38 927.38 469.88 932.88 468.62Z"/><path fill="#beeefd" d="M952.12 436.88 946.38 437.38 932.38 468.88 938.12 468.88 951.62 438.88Z"/><path fill="#afdae8" d="M957.62 437.88 951.88 436.88 937.88 467.88 937.88 468.88 943.62 469.62 957.62 438.62Z"/><path fill="#98becb" d="M963.12 439.62 957.38 437.88 943.62 468.12 943.38 469.88 947.88 471.38 949.12 471.12Z"/><path fill="#7d9ca7" d="M963.62 439.88 962.62 439.88 948.62 470.88 948.62 471.62 953.12 474.12 954.12 473.88 967.88 443.12 967.88 442.12Z"/><path fill="#5e767d" d="M968.38 442.38 967.62 442.38 953.62 473.62 953.88 474.62 957.88 477.62 958.38 477.62 972.38 446.38 972.38 445.62Z"/><path fill="#3c4b50" d="M972.62 445.88 971.88 446.12 958.12 476.62 958.12 477.88 961.38 481.38 962.12 481.38 976.12 450.12 975.38 448.62Z"/><path fill="#2c373a" d="M976.38 449.88 975.62 449.88 961.62 481.12 964.12 485.62 964.88 485.62 967.62 479.62 967.62 478.12 965.62 475.12 972.88 458.88 973.62 457.88 977.12 458.38 978.88 454.62 978.62 453.38Z"/><path fill="#4e6268" d="M967.88 478.62 967.38 478.62 964.38 485.38 965.88 490.12 966.62 490.12 969.38 483.88 969.38 482.62ZM978.38 454.38 976.88 458.38 980.62 458.88 979.12 454.38Z"/><path fill="#6f8a93" d="M969.62 483.38 968.88 483.62 966.12 489.88 966.62 494.88 967.12 494.88 970.12 488.12Z"/><path fill="#8cafba" d="M970.12 487.88 969.62 487.88 966.62 494.62 966.12 499.12 966.62 499.12 969.62 492.38Z"/><path fill="#a5cedb" d="M965.88 500.62 965.38 500.62 965.12 501.62 965.62 501.62ZM967.88 496.12 967.38 496.12 965.88 499.88 966.38 499.88ZM968.62 494.38 968.12 494.38 967.88 495.38 968.38 495.38ZM968.88 492.62 968.88 493.12 969.38 493.12 969.38 492.62Z"/><path fill="#ffa600" d="M1121.88 255.88 1114.12 273.62 1136.38 277.12 1135.12 274.12 1134.88 261.12 1135.62 257.88ZM1065.38 246.38 1065.38 247.12 1066.38 248.12 1067.62 250.88 1067.62 254.12 1067.12 255.88 1065.62 258.38 1063.88 260.12 1060.38 262.62 1057.38 263.88 1057.38 264.38 1082.88 268.38 1090.62 250.62Z"/><path fill="#754c00" d="M1114.12 273.38 1114.12 297.62 1136.38 301.12 1136.38 276.88ZM1057.62 264.12 1057.62 264.88 1060.38 268.12 1062.38 272.38 1063.12 277.12 1062.38 281.38 1060.88 284.38 1057.38 287.88 1057.38 288.38 1073.38 290.88 1073.38 289.12 1082.12 270.12 1082.62 268.12Z"/><path fill="#ffa600" d="M1134.12 223.38 1104.62 218.62 1073.12 289.12 1102.62 293.88Z"/><path fill="#754c00" d="M1073.12 288.88 1073.12 325.12 1102.62 329.88 1102.62 293.62Z"/><path fill="#ba7800" d="M1134.12 223.62 1133.62 223.62 1102.38 293.12 1102.38 329.38 1102.88 329.38 1116.88 298.38 1116.88 297.62 1114.38 297.12 1114.62 272.88 1122.38 256.12 1134.12 257.88Z"/><path fill="#ffa600" d="M1042.62 242.38 1042.62 244.12 1043.62 244.88 1046.38 245.12 1048.38 243.88 1048.12 242.12 1046.62 241.38 1044.38 241.38Z"/><path fill="#df9000" d="M1048.12 243.12 1048.12 243.88 1053.12 245.62 1053.88 245.38 1053.62 244.12Z"/><path fill="#de8f00" d="M1048.12 242.88 1048.38 243.62 1053.88 244.62 1053.62 243.12Z"/><path fill="#dd8f00" d="M1047.88 242.38 1048.12 243.12 1053.88 243.62 1053.62 242.38Z"/><path fill="#df9000" d="M1052.88 241.38 1051.38 241.38 1047.88 242.12 1047.88 242.62 1053.38 242.62Z"/><path fill="#e19200" d="M1052.62 241.12 1051.12 240.38 1047.38 241.88 1047.38 242.38 1052.62 241.62Z"/><path fill="#e59400" d="M1051.38 240.38 1049.62 239.88 1047.12 241.38 1047.12 242.12 1050.88 241.12Z"/><path fill="#e99700" d="M1049.88 239.62 1048.12 239.38 1046.38 241.88 1047.38 241.88 1049.88 240.38Z"/><path fill="#ef9b00" d="M1048.38 239.38 1046.62 239.12 1045.88 241.62 1046.88 241.62 1048.12 240.38Z"/><path fill="#f59f00" d="M1044.88 238.88 1045.12 241.62 1046.12 241.62 1046.88 239.12Z"/><path fill="#fba300" d="M1043.38 239.12 1044.38 241.62 1045.38 241.62 1045.12 239.12Z"/><path fill="#ffa700" d="M1041.62 239.38 1042.62 240.88 1043.88 241.88 1044.62 241.88 1044.62 240.88 1043.62 239.12Z"/><path fill="#ffab00" d="M1040.38 239.88 1040.38 240.62 1042.88 241.88 1044.12 241.88 1044.12 241.38 1042.12 239.62Z"/><path fill="#ffaf00" d="M1039.12 240.62 1039.38 241.38 1043.88 242.12 1043.88 241.62 1040.62 240.12Z"/><path fill="#ffb200" d="M1038.12 241.38 1038.12 242.12 1042.12 242.62 1043.38 242.38 1043.38 241.88 1038.62 240.88Z"/><path fill="#ffb500" d="M1037.38 242.38 1037.38 242.88 1042.88 242.88 1042.38 242.12 1038.38 241.62Z"/><path fill="#ffb700" d="M1036.88 244.12 1042.88 243.38 1042.88 242.62 1037.12 242.62Z"/><path fill="#ffb800" d="M1042.88 243.12 1037.12 243.62 1036.88 244.38 1037.12 245.12 1042.38 243.88Z"/><path fill="#ffb800" d="M1042.88 243.38 1037.38 244.62 1037.12 245.62 1037.38 246.12 1042.88 244.12Z"/><path fill="#ffb700" d="M1043.12 243.88 1041.88 243.88 1037.62 245.62 1037.62 246.38 1038.12 246.88 1039.12 246.88 1042.88 244.62Z"/><path fill="#ffb500" d="M1043.38 244.12 1041.62 244.62 1038.38 246.62 1038.38 247.12 1039.12 247.88 1039.88 247.88 1043.38 244.88Z"/><path fill="#ffb300" d="M1043.88 244.38 1043.12 244.38 1039.62 247.38 1039.62 248.12 1041.12 248.62 1043.88 245.12Z"/><path fill="#ffb000" d="M1044.62 244.62 1043.62 244.62 1040.88 247.88 1040.88 248.62 1042.88 248.62Z"/><path fill="#ffac00" d="M1044.88 244.62 1044.12 244.88 1042.38 249.12 1044.38 249.38 1045.12 245.62Z"/><path fill="#ffa800" d="M1044.88 244.88 1044.12 249.38 1045.88 249.38 1045.88 245.12Z"/><path fill="#fea400" d="M1045.38 244.88 1045.62 249.38 1047.62 249.12 1047.62 248.12 1046.38 244.88Z"/><path fill="#f7a000" d="M1046.12 244.62 1047.38 249.12 1049.38 248.88 1047.38 245.12Z"/><path fill="#f19c00" d="M1046.62 244.62 1049.12 248.88 1050.88 248.38 1050.88 247.88 1047.38 244.38Z"/><path fill="#eb9800" d="M1047.12 244.38 1047.12 244.88 1050.38 248.12 1052.12 247.62 1052.12 247.12 1047.88 244.12Z"/><path fill="#e69500" d="M1047.62 243.88 1047.88 244.88 1051.38 247.38 1052.38 247.38 1052.88 246.88 1052.88 246.12Z"/><path fill="#e29200" d="M1047.88 243.62 1048.12 244.38 1052.62 246.62 1053.62 245.88 1053.38 245.12Z"/><path fill="#b67600" d="M1053.62 244.38 1053.62 245.88 1057.88 248.12 1058.88 248.12 1058.88 246.12Z"/><path fill="#b37400" d="M1053.62 243.38 1053.62 244.62 1059.12 246.62 1059.12 244.62Z"/><path fill="#b27300" d="M1053.38 242.38 1053.62 243.62 1058.88 244.88 1058.38 242.88Z"/><path fill="#b47500" d="M1052.62 241.38 1053.12 242.62 1058.12 243.12 1057.12 241.38Z"/><path fill="#b97800" d="M1051.38 240.38 1051.38 240.88 1052.38 241.62 1056.62 241.62 1056.62 241.12 1055.38 240.12Z"/><path fill="#c07c00" d="M1050.12 239.62 1050.88 240.62 1054.88 240.38 1054.88 239.88 1053.38 239.12Z"/><path fill="#c98200" d="M1048.62 239.12 1048.62 239.62 1049.62 240.12 1052.88 239.38 1052.88 238.88 1051.38 238.38 1049.88 238.38Z"/><path fill="#d48900" d="M1046.62 239.38 1048.88 239.62 1050.12 238.88 1050.38 238.12 1047.38 237.88Z"/><path fill="#e09100" d="M1044.62 237.62 1045.12 239.38 1046.88 239.38 1047.62 238.38 1047.62 237.88Z"/><path fill="#ed9900" d="M1045.12 239.38 1044.88 237.62 1041.88 237.88 1041.88 238.38 1043.12 239.38Z"/><path fill="#faa200" d="M1039.62 238.38 1039.62 239.12 1041.38 239.88 1043.38 239.38 1043.38 238.88 1042.38 238.12Z"/><path fill="#ffaa00" d="M1036.88 239.38 1036.88 239.88 1039.62 240.38 1041.62 239.88 1041.62 239.38 1039.88 238.62Z"/><path fill="#ffb100" d="M1035.12 240.38 1035.12 240.88 1039.38 241.12 1040.12 240.62 1039.88 239.88 1036.38 239.62Z"/><path fill="#ffb700" d="M1033.38 242.38 1037.88 242.12 1038.88 241.38 1038.88 240.88 1034.88 240.62 1033.38 241.88Z"/><path fill="#ffbc00" d="M1038.12 241.62 1033.12 242.12 1032.38 243.88 1037.38 243.12Z"/><path fill="#ffc000" d="M1037.38 242.88 1032.12 243.62 1031.88 245.62 1037.12 244.12Z"/><path fill="#ffc200" d="M1037.38 244.12 1036.12 243.88 1031.88 245.38 1031.88 247.38 1037.38 245.12Z"/><path fill="#ffc200" d="M1037.38 244.88 1032.12 246.88 1031.88 247.62 1032.38 248.62 1033.38 248.88 1037.62 246.12Z"/><path fill="#ffc100" d="M1038.62 246.62 1037.88 245.88 1037.12 245.88 1032.62 248.62 1032.62 249.12 1033.88 250.62 1034.38 250.62 1038.38 247.38Z"/><path fill="#ffbe00" d="M1039.62 247.62 1038.88 246.88 1037.62 247.12 1034.12 250.12 1034.12 250.88 1036.12 251.88 1039.62 248.12Z"/><path fill="#ffb900" d="M1040.88 248.12 1039.38 247.62 1035.88 251.38 1035.88 252.12 1038.38 252.88 1040.62 249.38Z"/><path fill="#ffb300" d="M1042.62 248.62 1040.62 248.38 1037.88 253.12 1040.88 253.62Z"/><path fill="#ffac00" d="M1042.12 248.88 1040.38 253.88 1043.38 254.12 1044.12 248.88Z"/><path fill="#fea500" d="M1043.88 249.12 1043.12 254.12 1046.38 254.38 1046.12 249.12Z"/><path fill="#f29c00" d="M1045.88 249.12 1045.88 254.12 1049.12 254.12 1047.88 248.88Z"/><path fill="#e59400" d="M1047.62 248.88 1048.62 253.88 1049.38 254.12 1051.38 253.62 1051.62 252.88 1049.62 248.88Z"/><path fill="#d88c00" d="M1049.12 248.62 1051.38 253.38 1054.12 252.62 1051.12 248.12 1049.88 248.12Z"/><path fill="#cd8500" d="M1050.62 247.88 1050.88 248.88 1053.62 252.38 1054.62 252.38 1056.12 251.38 1056.12 250.88 1052.38 247.38Z"/><path fill="#c37e00" d="M1051.88 247.12 1051.88 247.62 1055.62 251.12 1056.38 251.12 1057.62 250.12 1056.88 248.88 1053.38 246.38 1052.62 246.38Z"/><path fill="#bb7900" d="M1053.12 245.62 1052.88 246.62 1057.12 249.88 1057.62 249.88 1058.62 248.62 1058.62 247.88 1053.88 245.38Z"/><path fill="#865700" d="M1058.88 246.38 1058.38 248.38 1063.12 251.62 1063.62 249.12Z"/><path fill="#825400" d="M1058.88 244.88 1059.12 246.88 1063.62 249.38 1063.38 246.62Z"/><path fill="#815400" d="M1058.12 243.12 1058.88 245.12 1063.38 246.88 1062.62 244.62Z"/><path fill="#845600" d="M1056.88 241.62 1058.12 243.38 1062.38 244.88 1062.12 243.88 1060.88 242.62Z"/><path fill="#8b5a00" d="M1055.12 240.12 1055.12 240.62 1056.38 241.62 1060.62 242.88 1060.62 242.38 1059.12 241.12Z"/><path fill="#966100" d="M1053.12 239.12 1053.12 239.62 1054.62 240.38 1058.38 241.12 1058.38 240.62 1055.88 239.38Z"/><path fill="#a36900" d="M1051.12 238.38 1051.12 238.88 1052.62 239.38 1055.12 239.62 1055.12 239.12Z"/><path fill="#b27300" d="M1048.12 237.62 1048.62 238.38 1051.62 238.62 1051.62 238.12Z"/><path fill="#c47f00" d="M1045.88 237.62 1045.88 238.12 1048.38 238.12 1048.38 237.62Z"/><path fill="#d68b00" d="M1042.88 237.62 1042.88 238.12 1044.62 238.12 1044.62 237.62Z"/><path fill="#e99600" d="M1037.12 238.62 1037.12 239.12 1037.62 239.12 1037.62 238.62ZM1042.12 237.88 1038.38 238.38 1038.38 238.88 1042.12 238.38Z"/><path fill="#faa200" d="M1039.12 238.62 1037.38 238.62 1033.88 239.88 1033.88 240.38 1037.12 239.88 1039.12 239.12Z"/><path fill="#ffad00" d="M1036.62 239.62 1034.12 239.88 1031.38 241.38 1031.38 241.88 1034.88 241.12 1036.38 240.38Z"/><path fill="#ffb600" d="M1035.12 240.62 1031.12 241.62 1029.12 243.38 1029.12 243.88 1033.62 242.38 1035.12 241.12Z"/><path fill="#ffbd00" d="M1033.38 242.12 1029.38 243.38 1027.88 245.88 1032.38 244.12 1033.38 242.88Z"/><path fill="#ffc200" d="M1032.38 243.88 1028.12 245.38 1027.62 245.88 1027.38 248.12 1031.88 245.88Z"/><path fill="#ffc500" d="M1032.12 245.38 1027.12 247.88 1027.38 250.38 1032.12 247.62Z"/><path fill="#ffc600" d="M1032.38 247.38 1031.38 247.38 1027.38 250.12 1028.38 252.62 1028.88 252.62 1032.88 249.12Z"/><path fill="#ffc400" d="M1033.12 248.88 1032.38 248.88 1028.38 252.38 1029.88 254.62 1030.62 254.62 1034.12 250.88 1034.12 250.12Z"/><path fill="#ffbf00" d="M1034.38 250.38 1033.88 250.38 1030.12 254.38 1030.12 254.88 1032.12 256.38 1033.12 256.12 1035.88 252.12 1035.88 251.38Z"/><path fill="#ffb900" d="M1036.12 251.62 1035.38 251.88 1032.38 256.12 1032.38 256.62 1034.88 257.88 1035.88 257.88 1038.12 253.38 1038.12 252.62Z"/><path fill="#ffb000" d="M1037.88 252.88 1035.62 257.12 1035.62 258.12 1039.12 258.88 1040.62 253.38Z"/><path fill="#ffa600" d="M1040.38 253.62 1038.88 259.12 1042.62 259.62 1043.38 253.88Z"/><path fill="#ef9b00" d="M1043.12 253.88 1042.38 259.62 1046.38 259.62 1046.38 254.12Z"/><path fill="#dd8f00" d="M1046.12 254.12 1046.12 259.62 1050.12 259.38 1049.12 253.88Z"/><path fill="#ca8300" d="M1051.62 253.12 1048.88 253.88 1049.88 259.38 1053.62 258.62 1053.62 257.62Z"/><path fill="#b97700" d="M1051.38 253.12 1053.38 258.62 1056.88 257.38 1056.88 256.62 1054.12 252.38Z"/><path fill="#a86d00" d="M1055.62 251.12 1053.88 252.12 1053.88 252.88 1056.62 257.38 1057.12 257.38 1059.62 255.88 1059.62 255.38 1056.38 251.12Z"/><path fill="#9a6400" d="M1057.38 249.62 1055.88 250.88 1055.88 251.38 1059.12 255.62 1059.88 255.62 1061.62 254.12 1061.62 253.38 1057.88 249.62Z"/><path fill="#8f5c00" d="M1058.38 248.12 1057.38 249.88 1061.38 253.88 1061.88 253.88 1063.12 251.38 1059.38 248.38Z"/><path fill="#543600" d="M1063.38 249.12 1062.88 251.88 1066.38 255.62 1066.88 255.62 1067.38 252.38 1063.88 249.12Z"/><path fill="#4e3200" d="M1063.38 247.12 1063.38 249.38 1065.62 251.62 1067.38 252.62 1067.38 249.88 1064.12 247.12Z"/><path fill="#4d3200" d="M1062.38 244.88 1063.12 247.12 1066.12 249.62 1067.12 249.88 1066.12 247.12 1063.12 244.88Z"/><path fill="#513400" d="M1060.62 242.62 1062.38 245.12 1065.62 247.12 1065.62 246.38 1064.12 244.62Z"/><path fill="#5a3a00" d="M1059.12 241.38 1059.38 242.12 1063.12 244.38 1063.12 243.88Z"/><path fill="#ffae00" d="M1031.12 241.88 1028.38 243.38 1026.12 245.38 1026.12 245.88 1029.88 243.62Z"/><path fill="#ffb700" d="M1029.38 243.62 1025.88 245.62 1024.38 248.38 1027.38 246.62 1028.62 245.38Z"/><path fill="#ffbe00" d="M1028.12 245.62 1024.12 248.38 1023.38 251.38 1023.88 251.38 1027.62 248.12Z"/><path fill="#ffc200" d="M1027.38 248.12 1023.38 251.12 1023.62 254.12 1024.12 254.12 1027.62 250.62Z"/><path fill="#ffc200" d="M1027.88 250.38 1027.12 250.38 1023.62 253.88 1024.62 256.62 1025.38 256.62 1028.62 252.88Z"/><path fill="#ffc000" d="M1028.88 252.62 1028.12 252.62 1024.88 256.38 1024.88 257.12 1026.62 259.12 1027.62 258.88 1030.38 254.88Z"/><path fill="#ffba00" d="M1030.62 254.62 1029.62 254.88 1026.88 258.88 1026.88 259.38 1029.38 261.38 1030.38 261.12 1032.62 256.88 1032.62 256.12Z"/><path fill="#ffb200" d="M1032.38 256.38 1029.88 260.88 1029.88 261.62 1033.62 263.12 1035.62 257.62Z"/><path fill="#ffa700" d="M1035.38 257.62 1033.38 263.38 1037.62 264.38 1039.12 258.62Z"/><path fill="#ee9a00" d="M1038.62 258.88 1037.38 264.62 1042.12 265.12 1042.62 259.38Z"/><path fill="#d88c00" d="M1042.38 259.38 1041.88 265.12 1046.62 265.38 1046.38 259.38Z"/><path fill="#c17d00" d="M1050.12 259.12 1046.12 259.38 1046.38 265.38 1051.12 264.88Z"/><path fill="#aa6e00" d="M1053.88 258.38 1049.88 259.12 1050.88 264.88 1055.38 264.12 1055.38 262.88Z"/><path fill="#935f00" d="M1057.12 257.12 1053.62 258.12 1053.62 259.38 1055.12 263.88 1059.38 262.62Z"/><path fill="#7e5200" d="M1058.88 255.62 1056.88 256.88 1056.88 257.88 1058.88 262.38 1059.62 262.38 1062.62 260.62 1062.62 260.12 1059.88 255.62Z"/><path fill="#6c4600" d="M1061.38 253.62 1059.38 255.38 1059.38 255.88 1062.12 260.38 1062.88 260.38 1065.12 258.38 1065.12 257.88 1062.38 254.12Z"/><path fill="#5e3d00" d="M1062.62 251.62 1061.62 253.12 1061.62 254.12 1064.62 258.12 1065.12 258.12 1066.62 256.12 1066.62 255.12 1063.38 251.62Z"/><path fill="#462e00" d="M1067.62 252.62 1067.12 252.62 1066.62 254.62 1066.88 256.38 1067.38 256.38 1067.88 254.62Z"/><path fill="#4d3200" d="M1067.12 250.12 1067.12 252.88 1068.12 253.62 1067.88 250.38Z"/><path fill="#4e3300" d="M1065.88 247.38 1066.88 250.12 1067.62 250.38 1066.62 247.62Z"/><path fill="#ffab00" d="M1025.38 246.88 1024.88 246.88 1023.38 248.62 1022.12 251.12 1022.62 251.12 1023.88 249.62Z"/><path fill="#ffb200" d="M1024.38 248.62 1023.88 248.62 1021.62 251.38 1020.62 255.12 1021.12 255.12 1023.62 251.62Z"/><path fill="#ffb700" d="M1023.62 251.38 1022.88 251.62 1020.62 254.88 1020.88 258.12 1021.62 257.88 1023.88 254.38Z"/><path fill="#ffb700" d="M1024.12 254.12 1023.38 254.12 1020.88 257.88 1021.12 259.38 1022.12 261.12 1022.88 260.88 1025.12 256.88Z"/><path fill="#ffb400" d="M1025.12 256.62 1024.62 256.62 1022.12 260.88 1022.38 261.88 1024.38 264.12 1024.88 264.12 1027.12 259.62 1027.12 258.88Z"/><path fill="#ffae00" d="M1026.88 259.12 1024.62 263.38 1024.62 264.38 1028.12 266.62 1030.12 261.12Z"/><path fill="#fea400" d="M1029.62 261.38 1027.88 265.62 1027.88 266.62 1032.12 268.62 1033.62 262.88 1030.62 261.38Z"/><path fill="#ea9700" d="M1033.12 263.12 1031.88 268.62 1036.62 269.88 1037.62 264.12Z"/><path fill="#d38900" d="M1037.38 264.38 1036.38 270.12 1041.62 270.88 1042.12 264.88Z"/><path fill="#ba7800" d="M1041.88 264.88 1041.38 270.88 1046.88 271.12 1046.62 265.12Z"/><path fill="#9f6700" d="M1051.12 264.62 1046.38 265.12 1046.62 270.88 1051.88 270.62Z"/><path fill="#845500" d="M1055.62 263.88 1050.88 264.62 1051.62 270.62 1056.62 269.38Z"/><path fill="#694400" d="M1059.38 262.38 1055.12 263.62 1056.38 269.38 1060.38 268.12 1060.38 267.38 1057.88 264.38 1059.62 263.38Z"/><path fill="#513500" d="M1062.88 260.62 1061.88 260.38 1059.38 261.88 1059.38 263.38 1062.88 261.62Z"/><path fill="#3c2700" d="M1065.38 258.12 1064.62 258.12 1062.38 260.12 1062.62 261.38 1065.62 259.12Z"/><path fill="#3a2600" d="M1066.88 255.38 1066.38 255.38 1064.88 257.62 1065.12 258.88 1065.88 258.88 1067.12 256.88Z"/><path fill="#f8a100" d="M1021.62 252.38 1021.12 252.38 1020.12 254.62 1018.88 259.12 1019.38 259.12Z"/><path fill="#ffa500" d="M1020.88 255.12 1020.38 255.12 1018.88 258.88 1019.12 262.38 1019.62 262.38 1021.12 258.62Z"/><path fill="#ffa600" d="M1021.38 258.38 1020.62 258.38 1019.12 262.12 1019.12 263.12 1020.38 265.88 1020.88 265.88 1022.38 261.88 1022.38 260.62Z"/><path fill="#fca300" d="M1022.12 261.12 1020.62 265.12 1020.62 266.38 1022.88 269.12 1023.38 269.12 1024.62 265.12 1024.62 263.62 1022.62 261.12Z"/><path fill="#f19c00" d="M1024.38 263.88 1023.12 269.12 1025.88 271.38 1026.88 271.62 1027.88 266.12Z"/><path fill="#e09100" d="M1027.62 266.38 1026.62 271.88 1031.12 273.62 1031.88 268.12Z"/><path fill="#cb8300" d="M1031.62 268.38 1030.88 273.88 1036.12 275.38 1036.62 269.62Z"/><path fill="#b17300" d="M1036.38 269.88 1035.88 275.38 1041.38 276.12 1041.62 270.62Z"/><path fill="#956100" d="M1041.38 270.62 1041.12 276.12 1046.88 276.38 1046.88 270.88Z"/><path fill="#784e00" d="M1051.88 270.38 1046.62 270.62 1046.62 276.38 1052.38 275.88Z"/><path fill="#5a3a00" d="M1056.88 269.12 1051.62 270.38 1052.12 275.88 1057.62 274.62Z"/><path fill="#3d2800" d="M1060.62 267.62 1056.62 269.12 1057.38 274.62 1062.12 272.88 1061.88 270.38Z"/><path fill="#432b00" d="M1061.38 270.12 1061.88 272.88 1062.38 272.88 1062.62 271.88 1061.88 270.12Z"/><path fill="#dc8e00" d="M1019.12 259.88 1018.62 259.88 1018.38 267.12 1018.88 267.12 1019.38 263.62Z"/><path fill="#dd8f00" d="M1019.12 262.88 1018.62 267.88 1019.88 270.62 1020.38 270.62 1020.88 265.62 1019.62 262.88Z"/><path fill="#d88c00" d="M1020.38 266.12 1020.12 271.12 1022.38 273.62 1022.88 273.62 1023.38 268.88 1021.12 266.12Z"/><path fill="#cc8400" d="M1023.12 268.88 1022.62 273.88 1026.38 276.38 1026.88 271.38Z"/><path fill="#bb7900" d="M1026.38 271.62 1026.12 276.38 1029.88 278.38 1030.88 278.38 1031.12 273.38 1027.38 271.62Z"/><path fill="#a56b00" d="M1030.88 273.62 1030.38 278.62 1035.88 280.12 1035.88 274.88Z"/><path fill="#8a5900" d="M1035.62 275.12 1035.62 280.12 1041.38 281.12 1041.38 275.88Z"/><path fill="#6d4700" d="M1041.12 275.88 1041.12 281.12 1046.88 281.12 1046.88 276.12Z"/><path fill="#4e3300" d="M1052.38 275.62 1046.62 276.12 1046.62 281.12 1052.62 280.62Z"/><path fill="#372400" d="M1057.62 274.38 1052.12 275.62 1052.38 280.62 1057.88 279.62Z"/><path fill="#553700" d="M1062.12 272.62 1057.38 274.38 1057.62 279.38 1062.62 277.62Z"/><path fill="#714900" d="M1062.12 272.38 1062.38 277.62 1062.88 277.62 1063.38 276.62 1062.62 272.38Z"/><path fill="#b27300" d="M1018.62 267.62 1019.12 272.12 1020.12 274.38 1020.62 274.38 1020.38 270.62 1019.12 267.62Z"/><path fill="#ad7000" d="M1019.88 270.38 1020.38 274.88 1022.88 278.12 1023.38 278.12 1022.88 273.38 1020.38 270.38Z"/><path fill="#a26900" d="M1022.62 273.62 1022.88 277.88 1025.88 280.38 1026.62 280.38 1026.38 276.12Z"/><path fill="#905d00" d="M1026.12 276.12 1026.38 280.62 1029.12 282.12 1031.12 282.62 1030.62 278.12Z"/><path fill="#7a4f00" d="M1030.38 278.38 1030.88 282.88 1035.88 284.12 1035.88 279.88Z"/><path fill="#5f3e00" d="M1035.62 279.88 1035.62 284.38 1041.38 285.12 1041.12 280.62Z"/><path fill="#422b00" d="M1041.12 280.88 1041.12 285.12 1046.88 285.38 1046.88 280.88Z"/><path fill="#432b00" d="M1052.62 280.38 1046.62 280.88 1046.62 285.38 1052.38 284.88Z"/><path fill="#623f00" d="M1057.88 279.38 1052.38 280.38 1052.12 284.88 1057.62 283.62Z"/><path fill="#805300" d="M1062.62 277.38 1057.62 279.12 1057.38 283.62 1062.38 281.62Z"/><path fill="#9b6500" d="M1063.38 276.88 1062.38 277.38 1061.88 281.88 1062.38 281.88 1062.88 280.88Z"/><path fill="#825400" d="M1021.62 277.62 1021.62 278.12 1022.12 278.12 1022.12 277.62ZM1020.88 275.88 1020.88 276.38 1021.38 276.38 1021.38 275.88ZM1020.12 274.12 1020.38 275.12 1020.88 275.12 1020.62 274.12Z"/><path fill="#7d5100" d="M1020.62 275.12 1022.12 279.12 1024.12 281.38 1024.62 281.38 1023.12 277.38 1021.12 275.12Z"/><path fill="#724a00" d="M1023.12 277.88 1024.38 281.88 1027.88 284.12 1026.88 280.38Z"/><path fill="#613f00" d="M1026.62 280.62 1027.62 284.12 1031.88 286.12 1031.12 282.38Z"/><path fill="#4c3100" d="M1030.88 282.62 1031.88 286.38 1036.62 287.62 1035.88 283.88Z"/><path fill="#332100" d="M1035.88 284.12 1036.38 287.62 1041.62 288.38 1041.38 284.88Z"/><path fill="#4f3300" d="M1041.12 284.88 1041.38 288.38 1046.88 288.62 1046.88 285.12Z"/><path fill="#6d4600" d="M1052.38 284.62 1046.62 285.12 1046.62 288.62 1051.88 288.12Z"/><path fill="#8b5a00" d="M1057.62 283.38 1052.12 284.62 1051.62 288.12 1056.88 287.12Z"/><path fill="#a76c00" d="M1062.12 281.62 1057.62 283.12 1057.12 283.62 1056.62 286.88 1060.62 285.62 1061.88 283.38Z"/><path fill="#c27d00" d="M1062.62 281.38 1061.88 281.62 1061.62 282.88 1062.12 282.88Z"/><path fill="#493000" d="M1026.12 283.62 1026.12 284.12 1026.62 284.12 1026.62 283.62ZM1024.88 282.12 1024.88 282.62 1025.62 282.88 1025.62 282.38ZM1023.88 280.88 1023.88 281.38 1024.62 281.62 1024.62 281.12ZM1022.88 279.62 1022.88 280.12 1023.38 280.12 1023.38 279.62Z"/><path fill="#3f2900" d="M1024.62 281.62 1026.38 284.38 1029.62 286.62 1029.62 285.88 1028.12 283.88Z"/><path fill="#362300" d="M1027.88 284.12 1029.88 287.12 1033.38 288.62 1033.38 287.88 1032.12 285.88Z"/><path fill="#492f00" d="M1031.88 286.12 1033.12 288.62 1037.62 289.88 1036.38 287.12Z"/><path fill="#603e00" d="M1036.38 287.38 1037.38 289.88 1042.12 290.62 1041.62 288.12Z"/><path fill="#7a4f00" d="M1041.38 288.12 1041.88 290.62 1046.62 290.88 1046.88 288.38Z"/><path fill="#956000" d="M1051.88 287.88 1046.62 288.38 1046.38 290.88 1051.12 290.38Z"/><path fill="#b07200" d="M1056.62 286.88 1051.62 287.88 1050.88 290.38 1055.62 289.38Z"/><path fill="#ca8300" d="M1060.38 285.38 1056.62 286.62 1055.38 288.62 1055.38 289.38 1057.88 288.62 1057.88 288.12 1060.38 285.88Z"/><path fill="#674200" d="M1030.62 287.12 1030.62 287.62 1032.12 288.62 1035.12 289.88 1035.12 289.38 1034.12 288.62Z"/><path fill="#774d00" d="M1033.38 288.38 1033.38 288.88 1035.12 290.12 1038.88 291.12 1038.12 289.88Z"/><path fill="#8b5a00" d="M1037.38 289.62 1037.38 290.12 1038.62 291.12 1042.62 291.62 1042.12 290.38Z"/><path fill="#a16800" d="M1041.88 290.38 1042.38 291.88 1046.62 291.88 1046.62 290.62Z"/><path fill="#b87700" d="M1051.12 290.12 1046.38 290.62 1046.38 291.88 1050.38 291.62Z"/><path fill="#d08600" d="M1055.38 289.12 1050.88 290.12 1050.12 291.38 1053.62 290.88 1055.12 289.88Z"/><path fill="#e69500" d="M1058.38 288.12 1055.12 289.12 1053.88 290.12 1053.88 290.62 1057.38 289.38 1058.38 288.62Z"/><path fill="#fba200" d="M1058.62 288.12 1057.38 288.62 1057.38 289.12 1058.62 288.62Z"/><path fill="#ffa600" d="M1135.62 257.38 1134.62 260.62 1134.88 265.12 1136.38 268.38 1137.62 269.88 1142.38 273.88 1146.88 276.12 1151.62 277.62 1158.62 278.62 1167.62 278.38 1173.62 276.88 1183.88 254.12 1184.12 252.62 1181.62 250.62 1177.12 248.38 1171.38 246.62 1161.88 245.62 1154.62 246.12 1149.38 247.38 1143.88 249.62 1138.62 253.38Z"/><path fill="#c78100" d="M1134.62 300.62 1134.62 306.38 1135.12 306.38 1135.12 300.62ZM1134.62 262.88 1134.62 272.62 1135.12 272.62 1135.12 262.88Z"/><path fill="#c98200" d="M1134.88 264.88 1134.88 274.62 1136.12 277.12 1136.12 300.62 1134.88 300.88 1134.88 308.38 1136.12 311.12 1136.62 311.12 1136.62 267.62 1135.38 264.88Z"/><path fill="#c37e00" d="M1136.38 268.12 1136.38 311.62 1138.62 314.38 1139.12 314.38 1139.12 270.62 1136.88 268.12Z"/><path fill="#b87700" d="M1138.88 270.88 1138.88 314.62 1141.88 316.88 1142.62 316.88 1142.62 273.38Z"/><path fill="#a66c00" d="M1142.38 273.62 1142.38 317.12 1147.12 319.12 1147.12 275.62Z"/><path fill="#905d00" d="M1146.88 275.88 1146.88 319.38 1152.12 320.88 1152.12 277.38Z"/><path fill="#754c00" d="M1151.88 277.38 1151.88 320.88 1153.62 321.12 1157.62 312.38 1157.62 278.12Z"/><path fill="#583900" d="M1163.38 278.38 1157.38 278.12 1157.38 311.88 1157.88 311.88 1163.38 299.62Z"/><path fill="#392500" d="M1168.88 277.88 1163.12 278.38 1163.12 299.12 1163.62 299.12 1168.88 287.38Z"/><path fill="#4d3200" d="M1173.38 276.88 1168.62 277.88 1168.62 286.88 1169.12 286.88Z"/></g>
<path fill="#ffffff" fill-opacity="0.27" d="M1133.1 366.2 1424.0 413.8 1503.0 238.4 1212.1 190.7 Z"/><path fill="#747475" fill-opacity="0.27" d="M1133.1 606.6 1424.0 654.3 1424.0 413.8 1133.1 366.2 Z"/><path fill="#b8b8ba" fill-opacity="0.27" d="M1424.0 654.3 1503.0 478.8 1503.0 238.4 1424.0 413.8 Z"/>
<g stroke="#000" stroke-width="1" fill="none" shape-rendering="crispEdges"><line x1="1056.23" y1="379.57" x2="1164.75" y2="397.36"/><line x1="1256.99" y1="412.48" x2="1585.78" y2="466.36"/><line x1="1056.23" y1="379.57" x2="939.84" y2="360.50" stroke-dasharray="3.040 3.040" stroke-dashoffset="0.000"/><line x1="854.88" y1="346.58" x2="732.97" y2="326.60" stroke-dasharray="3.040 3.040" stroke-dashoffset="204.032"/><line x1="1056.23" y1="379.57" x2="1087.93" y2="309.19"/><line x1="1127.06" y1="222.32" x2="1208.80" y2="40.84"/><line x1="1056.23" y1="379.57" x2="1032.19" y2="432.93" stroke-dasharray="3.290 3.290" stroke-dashoffset="0.000"/><line x1="995.99" y1="513.31" x2="888.55" y2="751.83" stroke-dasharray="3.290 3.290" stroke-dashoffset="146.679"/><line x1="1056.23" y1="379.57" x2="1056.23" y2="40.98"/><line x1="1056.23" y1="379.57" x2="1056.23" y2="471.20" stroke-dasharray="3.000 3.000" stroke-dashoffset="0.000"/><line x1="1056.23" y1="518.09" x2="1056.23" y2="751.84" stroke-dasharray="3.000 3.000" stroke-dashoffset="138.516"/></g>
</g>
<g id="icons" fill="none" stroke="#222" stroke-width="1.3" stroke-linejoin="round">
<!-- title icon -->
<g stroke="none"><circle cx="15.4" cy="13" r="6.4" fill="#2a3c5c"/><path d="M10 10.5a6.4 6.4 0 0 1 6-4.3l-2 3z" fill="#1a3a30"/>
<ellipse cx="16.8" cy="8.2" rx="2.2" ry="1.2" fill="#d0dcea"/><ellipse cx="9.9" cy="14" rx="1.1" ry="1.6" fill="#d8e0e8"/><ellipse cx="21" cy="14" rx="1.2" ry="1.6" fill="#d0dcec"/><circle cx="18.5" cy="15.5" r="0.9" fill="#a8c0e0"/><path d="M17.5 10a3 3 0 0 1 4 2.5l-2.5-0.5z" fill="#0a1020"/></g>
<!-- title buttons glyphs -->
<rect x="1538" y="15" width="6" height="2" fill="#000" stroke="none"/>
<path d="M1554.5 9.5h7v7h-7z" stroke="#000" stroke-width="1"/><rect x="1553.5" y="8" width="8" height="2" fill="#000" stroke="none"/>
<path d="M1572.5 9.5l7 7M1579.5 9.5l-7 7" stroke="#000" stroke-width="1.6"/>
<!-- editor dock float/close -->
<g stroke="#000" stroke-width="1.1">
<path d="M705.5 46h4.5v4.5M702.5 48.5h5v5h-5z"/><path d="M704.5 46.5h6" stroke-width="2"/><path d="M702 49h6" stroke-width="2"/>
<path d="M717.5 46.5l7 6.5M724.5 46.5l-7 6.5" stroke-width="1.6"/>
<path d="M1562.5 795h4.5v4.5M1559.5 797.5h5v5h-5z"/><path d="M1561.5 795.5h6" stroke-width="2"/><path d="M1559 798h6" stroke-width="2"/>
<path d="M1574.5 795.5l7 6.5M1581.5 795.5l-7 6.5" stroke-width="1.6"/>
</g>
<!-- editor toolbar -->
<path d="M17.5 84.5v-8.5l3.5-4.5h7.5v13z" stroke-width="1.4"/>
<circle cx="23" cy="80" r="1.9" fill="#222" stroke="none"/>
<path d="M45 76.5h14v7.5h-14z" fill="#222" stroke="none"/>
<path d="M45 72.5h6l1.5 1.5h2" stroke-width="2.2"/>
<path d="M53 76.5l6-1.5" stroke-width="1.6"/><path d="M58.5 72.3l4.5 2.7-4.5 2.7z" fill="#222" stroke="none"/>
<path d="M78 70.5h15v15h-15z" fill="#222" stroke="none"/>
<path d="M81 70.5h9.5v4h-9.5z" fill="#d4d0c8" stroke="none"/><rect x="82.3" y="71" width="1.4" height="3" fill="#222" stroke="none"/>
<rect x="80.5" y="82" width="10" height="1.6" fill="#d4d0c8" stroke="none"/>
<path d="M104 65v26" stroke="#808080" stroke-width="1"/><path d="M105 65v26" stroke="#fff" stroke-width="1"/>
<path d="M130 82.5a7.8 7.8 0 0 0-14.5-3.5" stroke-width="2.3"/><path d="M113 76l0.5 7 6-1.5z" fill="#222" stroke="none"/>
<path d="M145 82.5a7.8 7.8 0 0 1 14.5-3.5" stroke-width="2.3"/><path d="M162 76l-0.5 7-6-1.5z" fill="#222" stroke="none"/>
<g stroke="#333" stroke-width="1.4" stroke-linejoin="miter">
<path d="M175 73h9M186 73h4M177 76.5h6.5M177 79.5h6.5M175 83h9M186 83h4"/>
<path d="M185.5 78h5.5" stroke-width="1.8"/><path d="M188.5 74.8l-3.2 3.2 3.2 3.2" stroke-width="1.8"/>
<path d="M207 73h4M213 73h11M215 76.5h9M215 79.5h9M207 83h4M213 83h11"/>
<path d="M206 78h5.5" stroke-width="1.8"/><path d="M208.5 74.8l3.2 3.2-3.2 3.2" stroke-width="1.8"/>
</g>
<path d="M235 65v26M303 65v26" stroke="#808080" stroke-width="1"/><path d="M236 65v26M304 65v26" stroke="#fff" stroke-width="1"/>
<g id="prevIcon">
<path d="M252 67.5l8.5 4.5v9l-8.5 5-8.5-5v-9z M243.5 72l8.5 4.5 8.5-4.5 M252 76.5v5" stroke-dasharray="1.6 1.3" stroke-width="1.3"/>
<path d="M246.3 80.8l4 4.2-4 4.2M251.3 80.8l4 4.2-4 4.2" stroke-width="2.6" stroke-linejoin="miter" stroke-linecap="butt"/>
</g>
<g id="rendIcon">
<path d="M282.5 66.8l8.8 5v10.3l-8.8 5-8.8-5v-10.3z M273.7 71.8l8.8 4.6 8.8-4.6 M282.5 76.4v4" stroke-width="1.3"/>
<path d="M279.8 80.6h5.6l-1.4 2.4h-2.8z" fill="#222" stroke="none"/><rect x="280.3" y="84" width="4.6" height="1.3" fill="#222" stroke="none"/><rect x="279.8" y="87.6" width="5.8" height="2" fill="#222" stroke="none"/>
</g>
<path d="M314 77.5v-5.5l4-4.5h7.5v10" stroke-width="1.6" stroke-linejoin="miter"/><path d="M314 72l4-4.5v4z" fill="#222" stroke="none"/>
<text x="320.5" y="87.5" font-family="Liberation Sans" font-weight="bold" font-size="10.5" fill="#111" stroke="#111" stroke-width="0.3" text-anchor="middle" textLength="19.5" lengthAdjust="spacingAndGlyphs">STL</text>
<!-- scrollbar arrows -->
<path d="M715 107h7l-3.5-3.5z" fill="#000" stroke="none"/>
<path d="M715 1046h7l-3.5 3.5z" fill="#000" stroke="none"/>
<!-- viewport toolbar -->
<use href="#prevIcon" transform="translate(497.5 690.5)"/>
<use href="#rendIcon" transform="translate(498.5 690.5)"/>
<path d="M800.5 756v26M930.5 756v26M1122.5 756v26M1190.5 756v26" stroke="#808080" stroke-width="1"/>
<path d="M801.5 756v26M931.5 756v26M1123.5 756v26M1191.5 756v26" stroke="#fff" stroke-width="1"/>
<g stroke="#222">
<path d="M809.5 763.5v-3.8h3.8M820.7 759.7h3.8v3.8M809.5 769.8v3.8h3.8" stroke-width="2.1" stroke-linejoin="miter" stroke-linecap="butt"/>
<circle cx="816.4" cy="766.3" r="4.4" stroke-width="2.2"/><path d="M819.5 769.6l5 6" stroke-width="2.8"/>
<circle cx="847.1" cy="766.3" r="4.3" stroke-width="2.1"/><path d="M850.2 769.6l5.3 5.8" stroke-width="2.8"/><path d="M847.1 764.3v4M845.1 766.3h4" stroke-width="1.1"/>
<circle cx="878.7" cy="766.3" r="4.3" stroke-width="2.1"/><path d="M881.8 769.6l5 5.8" stroke-width="2.8"/><path d="M876.7 766.3h4" stroke-width="1.1"/>
<path d="M906.5 763.2a7.6 7.6 0 1 1-2.2 6" stroke-width="2.2"/><path d="M902.5 760.5l0.5 6.5 5.5-3.5z" fill="#222" stroke="none"/>
</g>
<g stroke="#2a2a2a" stroke-width="1.2" stroke-linejoin="miter">
<path d="M939.3 766.5l2.8-6.2h7.9l2.6 6.2-2.6 7.1h-7.9z M939.3 766.5h8.9l1.8-6.2M948.2 766.5l1.8 7.1"/>
<path d="M952.2 764.3l4.5 2.3-4.5 2.3z" fill="#222" stroke="none"/>
<path d="M972.1 766l6.8-2.6 6.7 2.6v6.2l-6.7 2.8-6.8-2.8z M972.1 766l6.8 2.6 6.7-2.6M978.9 768.6v6.4"/>
<path d="M977 763.3l1.9-4.3 1.9 4.3z" fill="#222" stroke="none"/>
<path d="M1001.7 762l6.6-2.6 6.5 2.6v7.5l-6.5 2.4-6.6-2.4z M1008.3 759.4v7.4M1001.7 769.5l6.6-2.7 6.5 2.7"/>
<path d="M1006.3 772.3h4l-2 4.5z" fill="#222" stroke="none"/>
<path d="M1049.3 767.3l-2.6-6.8h-8l-2.3 6.8 2.3 6.5h8z M1049.3 767.3h-8.8l-1.8-6.8M1040.5 767.3l-1.8 6.5"/>
<path d="M1037.2 765l-4.5 2.3 4.5 2.3z" fill="#222" stroke="none"/>
<path d="M1065.4 765l6.8-3 6.8 3v7.7l-6.8 2.8-6.8-2.8z M1065.4 765l6.8 2.6 6.8-2.6M1072.2 767.6v7.9"/>
<path d="M1065.4 765l6.8 2.6v7.9l-6.8-2.8z" fill="#2a2a2a"/>
<path d="M1096.2 765l6.8-3 6.8 3v7.7l-6.8 2.8-6.8-2.8z M1096.2 765l6.8 2.6M1103 767.6v7.9M1103 762v5.6l6.8 3.5"/>
<path d="M1103 762l6.8 3v6.1l-6.8-3.5z" fill="#2a2a2a"/>
<path d="M1133.5 768.5h7v6.5h-7z M1133.5 768.5l14.5-7.5M1140.5 768.5l7.5-7.5M1140.5 775l7.5-14" stroke-width="1.5"/>
</g>
<!-- pressed toggle buttons -->
<rect x="1156.5" y="754.5" width="29" height="28" fill="url(#chk)" stroke="none"/>
<path d="M1156.5 782.5v-28h29" stroke="#808080" stroke-width="1"/><path d="M1156.5 782.5h29v-28" stroke="#fff" stroke-width="1"/>
<rect x="1193.5" y="754.5" width="29" height="28" fill="url(#chk)" stroke="none"/>
<path d="M1193.5 782.5v-28h29" stroke="#808080" stroke-width="1"/><path d="M1193.5 782.5h29v-28" stroke="#fff" stroke-width="1"/>
<g stroke="#222" stroke-width="1.4">
<path d="M1165.5 767.5h10v10h-10z M1169.5 763.5h10v10h-10z M1165.5 767.5l4-4M1175.5 767.5l4-4M1175.5 777.5l4-4M1165.5 777.5l4-4" stroke-width="1.3"/>
</g>
<g stroke="#222" stroke-width="1.1">
<path d="M1208.5 769.5v-9.5M1208.5 769.5h11M1208.5 769.5l-7 7"/>
<circle cx="1208.5" cy="769.5" r="1.2" fill="#222"/>
<path d="M1239.5 770v-11M1239.5 770h10M1239.5 760.5h2.5M1239.5 763.5h2.5M1239.5 766.5h2.5M1242.5 770v-2M1245.5 770v-2M1248.5 770v-2"/>
<path d="M1231 776l8-7" stroke-dasharray="1.2 1.2" stroke-width="2"/>
</g>
<text x="1243" y="777" font-family="Liberation Sans" font-size="8.5" fill="#222" stroke="none">10</text>
<g fill="#222" stroke="none">
<circle cx="1264" cy="763.5" r="1.3"/><circle cx="1276" cy="763.5" r="1.3"/><circle cx="1264" cy="774" r="1.3"/><circle cx="1276" cy="774" r="1.3"/>
</g>
<path d="M1264 763.5h12v10.5h-12z" stroke="#333" stroke-width="1" stroke-dasharray="1.5 1"/>
<!-- size grip -->
<path d="M1574 1076.5l11.5-11.5M1578 1076.5l7.5-7.5M1582 1076.5l3.5-3.5" stroke="#fff" stroke-width="1"/>
<path d="M1575 1076.5l10.5-10.5M1579 1076.5l6.5-6.5M1583 1076.5l2.5-2.5" stroke="#808080" stroke-width="1.5"/>
</g>
<defs><pattern id="chk" width="2" height="2" patternUnits="userSpaceOnUse"><rect width="2" height="2" fill="#d4d0c8"/><rect width="1" height="1" fill="#fff"/><rect x="1" y="1" width="1" height="1" fill="#fff"/></pattern></defs>
<!-- small axes -->
<g stroke-width="1" fill="none">
<path d="M818.5 680.5V650" stroke="#2020a0"/>
<path d="M818.5 680.5L829 657.5" stroke="#40d040"/>
<path d="M818.5 680.5L856 686.5" stroke="#c02020"/>
<path d="M815.5 640.5h5.5l-5.5 6h5.5M828 650.5l3 3 3-3M831 653.5l-3 3M861.5 685l5 5.5M866.5 685l-5 5.5" stroke="#000"/>
</g>
<!-- red annotation -->
<g stroke="#e80c0c" fill="none" stroke-linecap="round" stroke-linejoin="round">
<path d="M792.5 660.5c1 2 4 4 6 8 3 6 5 13 5 22 0 12-1 22-1 32 0 9 1 15 3 21l3 7" stroke-width="1.3"/>
<path d="M785 726c4 0 8 2 12 6 4 4 7 8 10 13l1 4-3 1c-2-4-5-8-8-12-3-4-7-7-11-10z" fill="#e80c0c" stroke-width="1"/>
<path d="M791 732c2 4 4 9 6 14 1 4 2 8 3 12M795 737c1 5 2 10 4 15M799 741c1 4 3 8 5 12" stroke-width="1.2"/>
<path d="M829.5 724.5c-1 5-7 13-12 19-3 4-6 8-9 11" stroke-width="2.4"/>
<path d="M823.5 726.5c-3 5-8 10-11 15-2 3-4 6-6 10M827 728c-4 6-9 12-13 17M819 731c-3 5-7 10-10 15M815 738c-3 4-6 9-8 13" stroke-width="1.4"/>
<path d="M808 751c-2 3-5 6-8 9M806 749c-3 3-5 7-7 10" stroke-width="2.6"/>
<path d="M800 759.5c-4 3-6 7-6 11s1 8 2 11c3 4 8 6 14 6 6 0 13-2 18-4 6-3 11-6 12-10 1-3 0-6-2-9-3-4-8-8-14-9-5-1-9 0-13 0-4 0-7 1-10 4" stroke-width="1.5"/>
</g>

</svg>
</body></html>
